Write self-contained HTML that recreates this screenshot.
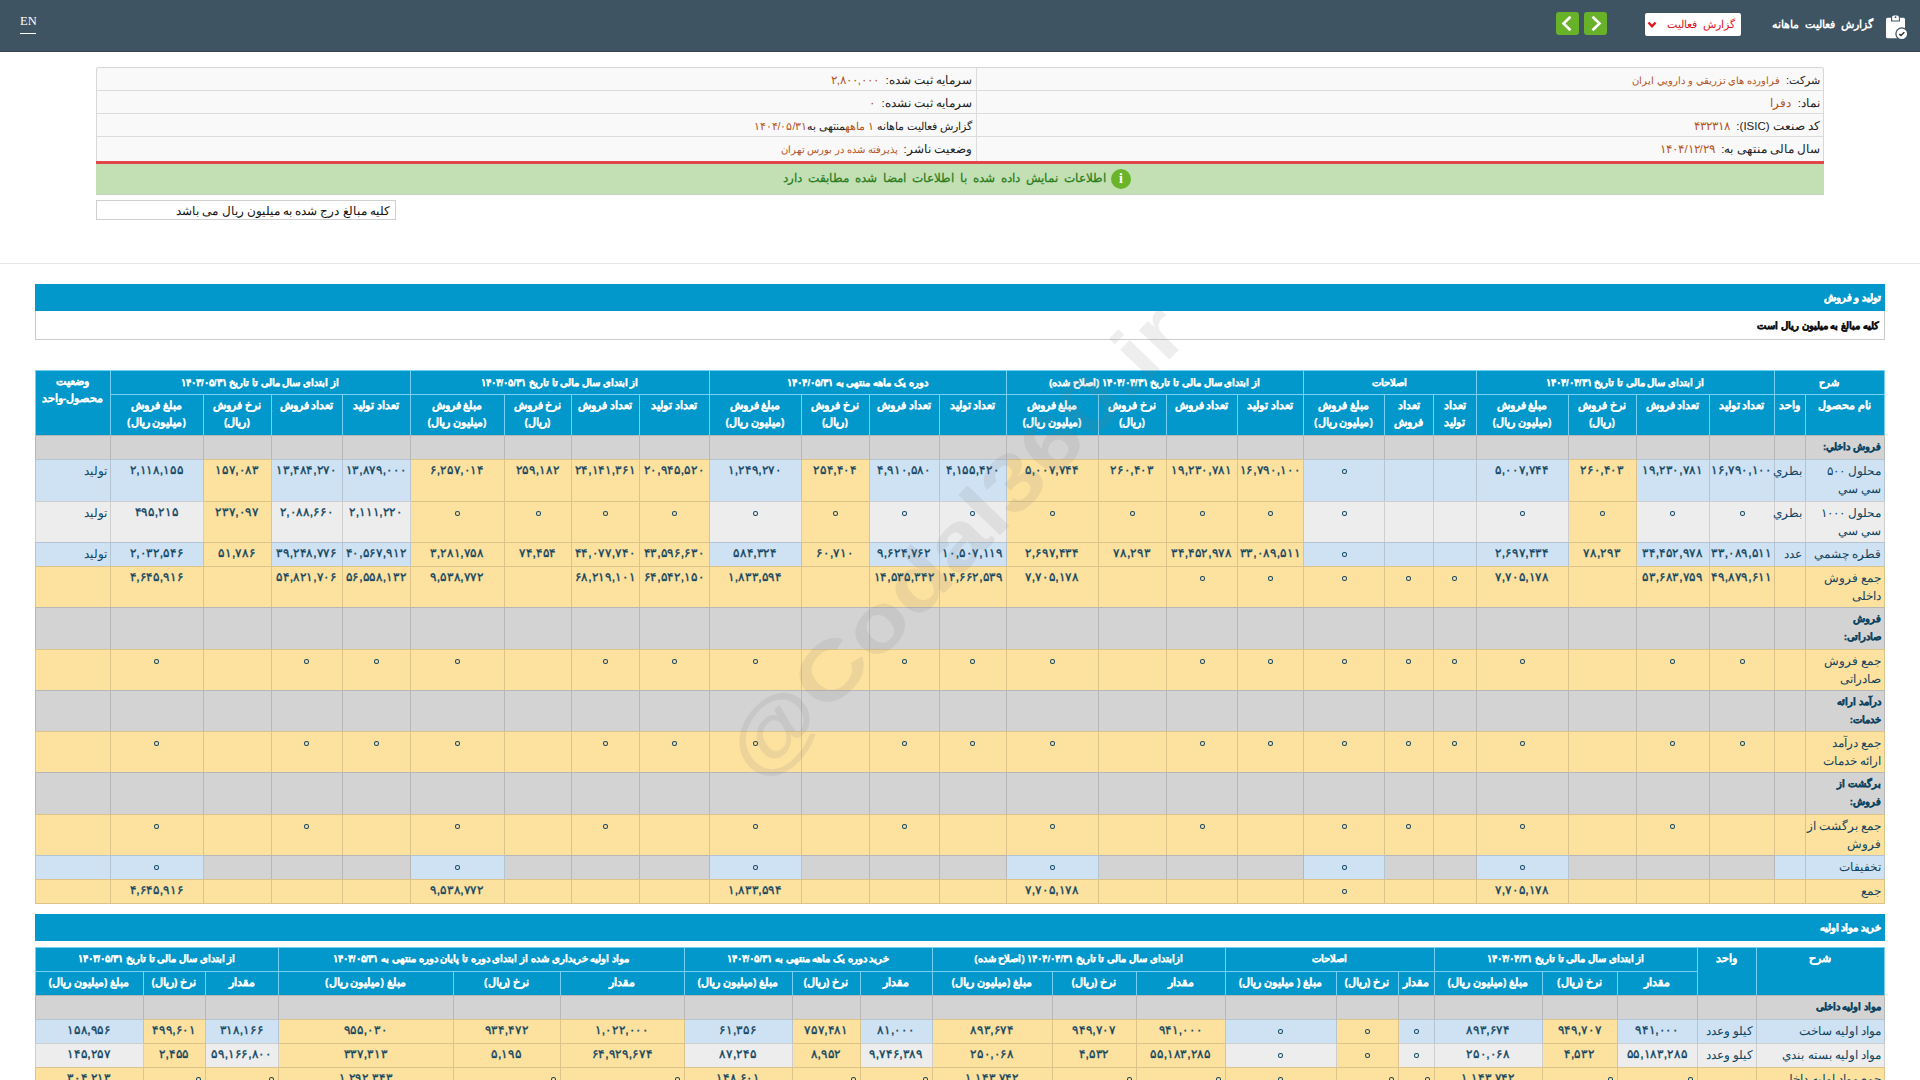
<!DOCTYPE html>
<html lang="fa"><head><meta charset="utf-8"><title>Codal</title>
<style>
html,body{margin:0;padding:0}
body{width:1920px;height:1080px;overflow:hidden;background:#fff;position:relative;font-family:"Liberation Sans",sans-serif;color:#0f4460}
.b{position:absolute;box-sizing:border-box;border:1px solid}
.t,.h,.hg,.n,.nb,.v,.a{position:absolute;box-sizing:border-box;direction:rtl;white-space:nowrap;overflow:visible}
.h{color:#fff;font-weight:bold;font-size:10.5px;line-height:17px;-webkit-text-stroke:0.2px #fff}
.hg{color:#fff;font-weight:bold;font-size:9.9px;line-height:17px;-webkit-text-stroke:0.25px #fff}
.n{font-size:11.5px;line-height:18px}
.nb{font-size:9.8px;line-height:18px;font-weight:bold;-webkit-text-stroke:0.35px #0f4460}
.v{font-size:11px;line-height:15px;font-weight:normal;-webkit-text-stroke:0.3px #0f4460;transform:scale(1.12);transform-origin:50% 7.5px}
.a{}
.z{position:absolute;width:5px;height:4.5px;box-sizing:border-box;border:1.4px solid #0f4460;border-radius:50%}
</style></head><body>
<!-- top bar -->
<div style="position:absolute;left:0;top:0;width:1920px;height:52px;background:#3e5462;box-sizing:border-box;border-bottom:1px solid #37464e"></div>
<div style="position:absolute;left:20px;top:14px;font-family:'Liberation Serif',serif;font-size:12.5px;color:#fff">EN</div>
<div style="position:absolute;left:20px;top:33px;width:16px;height:1px;background:#fff"></div>
<!-- green nav buttons -->
<div style="position:absolute;left:1556px;top:12px;width:23px;height:23px;background:#68b22a;border-radius:3px"></div>
<div style="position:absolute;left:1584px;top:12px;width:23px;height:23px;background:#68b22a;border-radius:3px"></div>
<svg style="position:absolute;left:1556px;top:12px" width="51" height="23"><path d="M14.5 4.8 L7.5 11.5 L14.5 18.2" stroke="#fff" stroke-width="2.6" fill="none"/><path d="M36.5 4.8 L43.5 11.5 L36.5 18.2" stroke="#fff" stroke-width="2.6" fill="none"/></svg>
<!-- select -->
<div style="position:absolute;left:1645px;top:13px;width:96px;height:23px;background:#fff;border-radius:2px"></div>
<div class="a" style="left:1660px;top:16px;width:75px;text-align:right;font-size:11.2px;word-spacing:3px;color:#e0141e;line-height:17px">گزارش فعالیت</div>
<svg style="position:absolute;left:1647px;top:21px" width="10" height="8"><path d="M1.5 1.5 L5 5.2 L8.5 1.5" stroke="#e0141e" stroke-width="2.4" fill="none"/></svg>
<div class="a" style="left:1740px;top:15px;width:133px;text-align:right;font-size:11.4px;word-spacing:3px;font-weight:bold;color:#fff;line-height:19px">گزارش فعالیت ماهانه</div>
<!-- clipboard icon -->
<svg style="position:absolute;left:1884px;top:14px" width="28" height="28" viewBox="0 0 28 28">
<rect x="2" y="3.7" width="19" height="20.6" rx="1.5" fill="#fff"/>
<path d="M7.6 7 L7.6 3.2 Q7.6 1 9.8 1 L13.2 1 Q15.4 1 15.4 3.2 L15.4 7 Z" fill="#fff" stroke="#3e5462" stroke-width="1.1"/>
<circle cx="11.5" cy="3.2" r="0.9" fill="#3e5462"/>
<circle cx="17.8" cy="19.8" r="5.9" fill="#fff" stroke="#3e5462" stroke-width="1.3"/>
<path d="M15.2 20 L17 21.5 L20.3 18.3" stroke="#333" stroke-width="1.6" fill="none"/>
</svg>

<!-- info box -->
<div style="position:absolute;left:96px;top:67px;width:1728px;height:96px;background:#f9f9f9;border:1px solid #d8d8d8;box-sizing:border-box;border-radius:2px"></div>
<div style="position:absolute;left:97px;top:90px;width:1726px;height:1px;background:#dcdcdc"></div>
<div style="position:absolute;left:97px;top:113px;width:1726px;height:1px;background:#dcdcdc"></div>
<div style="position:absolute;left:97px;top:136px;width:1726px;height:1px;background:#dcdcdc"></div>
<div style="position:absolute;left:976px;top:68px;width:1px;height:94px;background:#dcdcdc"></div>
<div style="position:absolute;left:96px;top:161px;width:1728px;height:3px;background:#e2464a"></div>
<div style="position:absolute;left:96px;top:164px;width:1728px;height:31px;background:#c3e0b5;border-bottom:1px solid #c7d3c0;box-sizing:border-box"></div>

<div class="a" style="left:1000px;top:72px;width:820px;text-align:right;font-size:11px;line-height:17px;color:#222">شرکت: <span style="color:#b5541c;font-size:10px">&nbsp;فراورده هاي تزريقي و دارويي ايران</span></div>
<div class="a" style="left:1000px;top:95px;width:820px;text-align:right;font-size:11.5px;line-height:17px;color:#222">نماد: <span style="color:#b5541c">&nbsp;دفرا</span></div>
<div class="a" style="left:1000px;top:118px;width:820px;text-align:right;font-size:11.5px;line-height:17px;color:#222">کد صنعت (ISIC): <span style="color:#b5541c">&nbsp;۴۳۲۳۱۸</span></div>
<div class="a" style="left:1000px;top:141px;width:820px;text-align:right;font-size:11.5px;line-height:17px;color:#222">سال مالی منتهی به: <span style="color:#b5541c">&nbsp;۱۴۰۴/۱۲/۲۹</span></div>
<div class="a" style="left:100px;top:72px;width:872px;text-align:right;font-size:11.5px;line-height:17px;color:#222">سرمایه ثبت شده: <span style="color:#b5541c">&nbsp;۲,۸۰۰,۰۰۰</span></div>
<div class="a" style="left:100px;top:95px;width:872px;text-align:right;font-size:11.5px;line-height:17px;color:#222">سرمایه ثبت نشده: <span style="color:#b5541c">&nbsp;۰</span></div>
<div class="a" style="left:100px;top:118px;width:872px;text-align:right;font-size:10.5px;line-height:17px;color:#222">گزارش فعالیت ماهانه <span style="color:#b5541c">۱ ماهه</span>منتهی به<span style="color:#b5541c">۱۴۰۴/۰۵/۳۱</span></div>
<div class="a" style="left:100px;top:141px;width:872px;text-align:right;font-size:11.5px;line-height:17px;color:#222">وضعیت ناشر: <span style="color:#b5541c;font-size:10px">&nbsp;پذیرفته شده در بورس تهران</span></div>
<div class="a" style="left:100px;top:170px;width:1006px;text-align:right;font-size:12.4px;word-spacing:2.6px;font-weight:normal;line-height:17px;color:#2a7d1c;-webkit-text-stroke:0.25px #2a7d1c">اطلاعات نمایش داده شده با اطلاعات امضا شده مطابقت دارد</div>
<div style="position:absolute;left:1111px;top:169px;width:20px;height:20px;border-radius:50%;background:#6ab42a"></div>
<div class="a" style="left:1111px;top:170px;width:20px;text-align:center;font-size:14px;font-weight:bold;color:#fff;line-height:18px;font-family:'Liberation Serif',serif;direction:ltr">i</div>

<div style="position:absolute;left:96px;top:200px;width:300px;height:20px;border:1px solid #cfcfcf;box-sizing:border-box;background:#fff"></div>
<div class="a" style="left:100px;top:202px;width:290px;text-align:right;font-size:11.7px;color:#111;line-height:17px">کلیه مبالغ درج شده به میلیون ریال می باشد</div>

<div style="position:absolute;left:0;top:263px;width:1920px;height:1px;background:#e6e6e6"></div>

<!-- section 1 -->
<div style="position:absolute;left:35px;top:284px;width:1850px;height:27px;background:#0298cb"></div>
<div class="a" style="left:1502px;top:288px;width:379px;text-align:right;font-size:9.8px;font-weight:bold;color:#fff;line-height:19px;-webkit-text-stroke:0.5px #fff">تولید و فروش</div>
<div style="position:absolute;left:35px;top:311px;width:1850px;height:29px;background:#fff;border:1px solid #cccccc;border-top:none;box-sizing:border-box"></div>
<div class="a" style="left:1500px;top:316px;width:379px;text-align:right;font-size:10px;font-weight:bold;color:#111;line-height:19px;-webkit-text-stroke:0.4px #111">کلیه مبالغ به میلیون ریال است</div>

<div class="b" style="left:1774px;top:370px;width:111px;height:25px;background:#0298cb;border-color:#74d1f2;"></div>
<div class="hg" style="left:1774px;top:374px;width:110px;height:20px;text-align:center;">شرح</div>
<div class="b" style="left:1476px;top:370px;width:299px;height:25px;background:#0298cb;border-color:#74d1f2;"></div>
<div class="hg" style="left:1476px;top:374px;width:298px;height:20px;text-align:center;">از ابتدای سال مالی تا تاریخ ۱۴۰۴/۰۴/۳۱</div>
<div class="b" style="left:1303px;top:370px;width:174px;height:25px;background:#0298cb;border-color:#74d1f2;"></div>
<div class="hg" style="left:1303px;top:374px;width:173px;height:20px;text-align:center;">اصلاحات</div>
<div class="b" style="left:1006px;top:370px;width:298px;height:25px;background:#0298cb;border-color:#74d1f2;"></div>
<div class="hg" style="left:1006px;top:374px;width:297px;height:20px;text-align:center;">از ابتدای سال مالی تا تاریخ ۱۴۰۴/۰۴/۳۱ (اصلاح شده)</div>
<div class="b" style="left:709px;top:370px;width:298px;height:25px;background:#0298cb;border-color:#74d1f2;"></div>
<div class="hg" style="left:709px;top:374px;width:297px;height:20px;text-align:center;">دوره یک ماهه منتهی به ۱۴۰۴/۰۵/۳۱</div>
<div class="b" style="left:410px;top:370px;width:300px;height:25px;background:#0298cb;border-color:#74d1f2;"></div>
<div class="hg" style="left:410px;top:374px;width:299px;height:20px;text-align:center;">از ابتدای سال مالی تا تاریخ ۱۴۰۴/۰۵/۳۱</div>
<div class="b" style="left:110px;top:370px;width:301px;height:25px;background:#0298cb;border-color:#74d1f2;"></div>
<div class="hg" style="left:110px;top:374px;width:300px;height:20px;text-align:center;">از ابتدای سال مالی تا تاریخ ۱۴۰۳/۰۵/۳۱</div>
<div class="b" style="left:35px;top:370px;width:76px;height:66px;background:#0298cb;border-color:#74d1f2;"></div>
<div class="h" style="left:35px;top:373px;width:75px;height:62px;text-align:center;">وضعیت<br>محصول-واحد</div>
<div class="b" style="left:1805px;top:394px;width:80px;height:42px;background:#0298cb;border-color:#74d1f2;"></div>
<div class="h" style="left:1805px;top:397px;width:79px;height:38px;text-align:center;">نام محصول</div>
<div class="b" style="left:1774px;top:394px;width:32px;height:42px;background:#0298cb;border-color:#74d1f2;"></div>
<div class="h" style="left:1774px;top:397px;width:31px;height:38px;text-align:center;">واحد</div>
<div class="b" style="left:1709px;top:394px;width:66px;height:42px;background:#0298cb;border-color:#74d1f2;"></div>
<div class="h" style="left:1709px;top:397px;width:65px;height:38px;text-align:center;">تعداد تولید</div>
<div class="b" style="left:1636px;top:394px;width:74px;height:42px;background:#0298cb;border-color:#74d1f2;"></div>
<div class="h" style="left:1636px;top:397px;width:73px;height:38px;text-align:center;">تعداد فروش</div>
<div class="b" style="left:1568px;top:394px;width:69px;height:42px;background:#0298cb;border-color:#74d1f2;"></div>
<div class="h" style="left:1568px;top:397px;width:68px;height:38px;text-align:center;">نرخ فروش<br>(ریال)</div>
<div class="b" style="left:1476px;top:394px;width:93px;height:42px;background:#0298cb;border-color:#74d1f2;"></div>
<div class="h" style="left:1476px;top:397px;width:92px;height:38px;text-align:center;">مبلغ فروش<br>(میلیون ریال)</div>
<div class="b" style="left:1433px;top:394px;width:44px;height:42px;background:#0298cb;border-color:#74d1f2;"></div>
<div class="h" style="left:1433px;top:397px;width:43px;height:38px;text-align:center;">تعداد<br>تولید</div>
<div class="b" style="left:1384px;top:394px;width:50px;height:42px;background:#0298cb;border-color:#74d1f2;"></div>
<div class="h" style="left:1384px;top:397px;width:49px;height:38px;text-align:center;">تعداد<br>فروش</div>
<div class="b" style="left:1303px;top:394px;width:82px;height:42px;background:#0298cb;border-color:#74d1f2;"></div>
<div class="h" style="left:1303px;top:397px;width:81px;height:38px;text-align:center;">مبلغ فروش<br>(میلیون ریال)</div>
<div class="b" style="left:1237px;top:394px;width:67px;height:42px;background:#0298cb;border-color:#74d1f2;"></div>
<div class="h" style="left:1237px;top:397px;width:66px;height:38px;text-align:center;">تعداد تولید</div>
<div class="b" style="left:1166px;top:394px;width:72px;height:42px;background:#0298cb;border-color:#74d1f2;"></div>
<div class="h" style="left:1166px;top:397px;width:71px;height:38px;text-align:center;">تعداد فروش</div>
<div class="b" style="left:1098px;top:394px;width:69px;height:42px;background:#0298cb;border-color:#74d1f2;"></div>
<div class="h" style="left:1098px;top:397px;width:68px;height:38px;text-align:center;">نرخ فروش<br>(ریال)</div>
<div class="b" style="left:1006px;top:394px;width:93px;height:42px;background:#0298cb;border-color:#74d1f2;"></div>
<div class="h" style="left:1006px;top:397px;width:92px;height:38px;text-align:center;">مبلغ فروش<br>(میلیون ریال)</div>
<div class="b" style="left:939px;top:394px;width:68px;height:42px;background:#0298cb;border-color:#74d1f2;"></div>
<div class="h" style="left:939px;top:397px;width:67px;height:38px;text-align:center;">تعداد تولید</div>
<div class="b" style="left:869px;top:394px;width:71px;height:42px;background:#0298cb;border-color:#74d1f2;"></div>
<div class="h" style="left:869px;top:397px;width:70px;height:38px;text-align:center;">تعداد فروش</div>
<div class="b" style="left:801px;top:394px;width:69px;height:42px;background:#0298cb;border-color:#74d1f2;"></div>
<div class="h" style="left:801px;top:397px;width:68px;height:38px;text-align:center;">نرخ فروش<br>(ریال)</div>
<div class="b" style="left:709px;top:394px;width:93px;height:42px;background:#0298cb;border-color:#74d1f2;"></div>
<div class="h" style="left:709px;top:397px;width:92px;height:38px;text-align:center;">مبلغ فروش<br>(میلیون ریال)</div>
<div class="b" style="left:639px;top:394px;width:71px;height:42px;background:#0298cb;border-color:#74d1f2;"></div>
<div class="h" style="left:639px;top:397px;width:70px;height:38px;text-align:center;">تعداد تولید</div>
<div class="b" style="left:571px;top:394px;width:69px;height:42px;background:#0298cb;border-color:#74d1f2;"></div>
<div class="h" style="left:571px;top:397px;width:68px;height:38px;text-align:center;">تعداد فروش</div>
<div class="b" style="left:504px;top:394px;width:68px;height:42px;background:#0298cb;border-color:#74d1f2;"></div>
<div class="h" style="left:504px;top:397px;width:67px;height:38px;text-align:center;">نرخ فروش<br>(ریال)</div>
<div class="b" style="left:410px;top:394px;width:95px;height:42px;background:#0298cb;border-color:#74d1f2;"></div>
<div class="h" style="left:410px;top:397px;width:94px;height:38px;text-align:center;">مبلغ فروش<br>(میلیون ریال)</div>
<div class="b" style="left:342px;top:394px;width:69px;height:42px;background:#0298cb;border-color:#74d1f2;"></div>
<div class="h" style="left:342px;top:397px;width:68px;height:38px;text-align:center;">تعداد تولید</div>
<div class="b" style="left:271px;top:394px;width:72px;height:42px;background:#0298cb;border-color:#74d1f2;"></div>
<div class="h" style="left:271px;top:397px;width:71px;height:38px;text-align:center;">تعداد فروش</div>
<div class="b" style="left:203px;top:394px;width:69px;height:42px;background:#0298cb;border-color:#74d1f2;"></div>
<div class="h" style="left:203px;top:397px;width:68px;height:38px;text-align:center;">نرخ فروش<br>(ریال)</div>
<div class="b" style="left:110px;top:394px;width:94px;height:42px;background:#0298cb;border-color:#74d1f2;"></div>
<div class="h" style="left:110px;top:397px;width:93px;height:38px;text-align:center;">مبلغ فروش<br>(میلیون ریال)</div>
<div class="b" style="left:1805px;top:435px;width:80px;height:25px;background:#d3d3d3;border-color:rgba(0,0,0,0.13);"></div>
<div class="b" style="left:1774px;top:435px;width:32px;height:25px;background:#d3d3d3;border-color:rgba(0,0,0,0.13);"></div>
<div class="b" style="left:1709px;top:435px;width:66px;height:25px;background:#d3d3d3;border-color:rgba(0,0,0,0.13);"></div>
<div class="b" style="left:1636px;top:435px;width:74px;height:25px;background:#d3d3d3;border-color:rgba(0,0,0,0.13);"></div>
<div class="b" style="left:1568px;top:435px;width:69px;height:25px;background:#d3d3d3;border-color:rgba(0,0,0,0.13);"></div>
<div class="b" style="left:1476px;top:435px;width:93px;height:25px;background:#d3d3d3;border-color:rgba(0,0,0,0.13);"></div>
<div class="b" style="left:1433px;top:435px;width:44px;height:25px;background:#d3d3d3;border-color:rgba(0,0,0,0.13);"></div>
<div class="b" style="left:1384px;top:435px;width:50px;height:25px;background:#d3d3d3;border-color:rgba(0,0,0,0.13);"></div>
<div class="b" style="left:1303px;top:435px;width:82px;height:25px;background:#d3d3d3;border-color:rgba(0,0,0,0.13);"></div>
<div class="b" style="left:1237px;top:435px;width:67px;height:25px;background:#d3d3d3;border-color:rgba(0,0,0,0.13);"></div>
<div class="b" style="left:1166px;top:435px;width:72px;height:25px;background:#d3d3d3;border-color:rgba(0,0,0,0.13);"></div>
<div class="b" style="left:1098px;top:435px;width:69px;height:25px;background:#d3d3d3;border-color:rgba(0,0,0,0.13);"></div>
<div class="b" style="left:1006px;top:435px;width:93px;height:25px;background:#d3d3d3;border-color:rgba(0,0,0,0.13);"></div>
<div class="b" style="left:939px;top:435px;width:68px;height:25px;background:#d3d3d3;border-color:rgba(0,0,0,0.13);"></div>
<div class="b" style="left:869px;top:435px;width:71px;height:25px;background:#d3d3d3;border-color:rgba(0,0,0,0.13);"></div>
<div class="b" style="left:801px;top:435px;width:69px;height:25px;background:#d3d3d3;border-color:rgba(0,0,0,0.13);"></div>
<div class="b" style="left:709px;top:435px;width:93px;height:25px;background:#d3d3d3;border-color:rgba(0,0,0,0.13);"></div>
<div class="b" style="left:639px;top:435px;width:71px;height:25px;background:#d3d3d3;border-color:rgba(0,0,0,0.13);"></div>
<div class="b" style="left:571px;top:435px;width:69px;height:25px;background:#d3d3d3;border-color:rgba(0,0,0,0.13);"></div>
<div class="b" style="left:504px;top:435px;width:68px;height:25px;background:#d3d3d3;border-color:rgba(0,0,0,0.13);"></div>
<div class="b" style="left:410px;top:435px;width:95px;height:25px;background:#d3d3d3;border-color:rgba(0,0,0,0.13);"></div>
<div class="b" style="left:342px;top:435px;width:69px;height:25px;background:#d3d3d3;border-color:rgba(0,0,0,0.13);"></div>
<div class="b" style="left:271px;top:435px;width:72px;height:25px;background:#d3d3d3;border-color:rgba(0,0,0,0.13);"></div>
<div class="b" style="left:203px;top:435px;width:69px;height:25px;background:#d3d3d3;border-color:rgba(0,0,0,0.13);"></div>
<div class="b" style="left:110px;top:435px;width:94px;height:25px;background:#d3d3d3;border-color:rgba(0,0,0,0.13);"></div>
<div class="b" style="left:35px;top:435px;width:76px;height:25px;background:#d3d3d3;border-color:rgba(0,0,0,0.13);"></div>
<div class="nb" style="left:1805px;top:438px;width:76px;height:21px;text-align:right;">فروش داخلي:</div>
<div class="b" style="left:1805px;top:459px;width:80px;height:43px;background:#cfe2f3;border-color:rgba(0,0,0,0.13);"></div>
<div class="b" style="left:1774px;top:459px;width:32px;height:43px;background:#cfe2f3;border-color:rgba(0,0,0,0.13);"></div>
<div class="b" style="left:1709px;top:459px;width:66px;height:43px;background:#cfe2f3;border-color:rgba(0,0,0,0.13);"></div>
<div class="b" style="left:1636px;top:459px;width:74px;height:43px;background:#cfe2f3;border-color:rgba(0,0,0,0.13);"></div>
<div class="b" style="left:1568px;top:459px;width:69px;height:43px;background:#fde19f;border-color:rgba(0,0,0,0.13);"></div>
<div class="b" style="left:1476px;top:459px;width:93px;height:43px;background:#cfe2f3;border-color:rgba(0,0,0,0.13);"></div>
<div class="b" style="left:1433px;top:459px;width:44px;height:43px;background:#cfe2f3;border-color:rgba(0,0,0,0.13);"></div>
<div class="b" style="left:1384px;top:459px;width:50px;height:43px;background:#cfe2f3;border-color:rgba(0,0,0,0.13);"></div>
<div class="b" style="left:1303px;top:459px;width:82px;height:43px;background:#cfe2f3;border-color:rgba(0,0,0,0.13);"></div>
<div class="b" style="left:1237px;top:459px;width:67px;height:43px;background:#fde19f;border-color:rgba(0,0,0,0.13);"></div>
<div class="b" style="left:1166px;top:459px;width:72px;height:43px;background:#fde19f;border-color:rgba(0,0,0,0.13);"></div>
<div class="b" style="left:1098px;top:459px;width:69px;height:43px;background:#fde19f;border-color:rgba(0,0,0,0.13);"></div>
<div class="b" style="left:1006px;top:459px;width:93px;height:43px;background:#fde19f;border-color:rgba(0,0,0,0.13);"></div>
<div class="b" style="left:939px;top:459px;width:68px;height:43px;background:#cfe2f3;border-color:rgba(0,0,0,0.13);"></div>
<div class="b" style="left:869px;top:459px;width:71px;height:43px;background:#cfe2f3;border-color:rgba(0,0,0,0.13);"></div>
<div class="b" style="left:801px;top:459px;width:69px;height:43px;background:#fde19f;border-color:rgba(0,0,0,0.13);"></div>
<div class="b" style="left:709px;top:459px;width:93px;height:43px;background:#cfe2f3;border-color:rgba(0,0,0,0.13);"></div>
<div class="b" style="left:639px;top:459px;width:71px;height:43px;background:#fde19f;border-color:rgba(0,0,0,0.13);"></div>
<div class="b" style="left:571px;top:459px;width:69px;height:43px;background:#fde19f;border-color:rgba(0,0,0,0.13);"></div>
<div class="b" style="left:504px;top:459px;width:68px;height:43px;background:#fde19f;border-color:rgba(0,0,0,0.13);"></div>
<div class="b" style="left:410px;top:459px;width:95px;height:43px;background:#fde19f;border-color:rgba(0,0,0,0.13);"></div>
<div class="b" style="left:342px;top:459px;width:69px;height:43px;background:#cfe2f3;border-color:rgba(0,0,0,0.13);"></div>
<div class="b" style="left:271px;top:459px;width:72px;height:43px;background:#cfe2f3;border-color:rgba(0,0,0,0.13);"></div>
<div class="b" style="left:203px;top:459px;width:69px;height:43px;background:#fde19f;border-color:rgba(0,0,0,0.13);"></div>
<div class="b" style="left:110px;top:459px;width:94px;height:43px;background:#cfe2f3;border-color:rgba(0,0,0,0.13);"></div>
<div class="b" style="left:35px;top:459px;width:76px;height:43px;background:#cfe2f3;border-color:rgba(0,0,0,0.13);"></div>
<div class="n" style="left:1805px;top:462px;width:76px;height:39px;text-align:right;">محلول ۵۰۰<br>سي سي</div>
<div class="n" style="left:1774px;top:462px;width:28px;height:39px;text-align:right;">بطري</div>
<div class="v" style="left:1709px;top:463px;width:65px;height:38px;text-align:center;">۱۶,۷۹۰,۱۰۰</div>
<div class="v" style="left:1636px;top:463px;width:73px;height:38px;text-align:center;">۱۹,۲۳۰,۷۸۱</div>
<div class="v" style="left:1568px;top:463px;width:68px;height:38px;text-align:center;">۲۶۰,۴۰۳</div>
<div class="v" style="left:1476px;top:463px;width:92px;height:38px;text-align:center;">۵,۰۰۷,۷۴۴</div>
<div class="z" style="left:1342px;top:469px"></div>
<div class="v" style="left:1237px;top:463px;width:66px;height:38px;text-align:center;">۱۶,۷۹۰,۱۰۰</div>
<div class="v" style="left:1166px;top:463px;width:71px;height:38px;text-align:center;">۱۹,۲۳۰,۷۸۱</div>
<div class="v" style="left:1098px;top:463px;width:68px;height:38px;text-align:center;">۲۶۰,۴۰۳</div>
<div class="v" style="left:1006px;top:463px;width:92px;height:38px;text-align:center;">۵,۰۰۷,۷۴۴</div>
<div class="v" style="left:939px;top:463px;width:67px;height:38px;text-align:center;">۴,۱۵۵,۴۲۰</div>
<div class="v" style="left:869px;top:463px;width:70px;height:38px;text-align:center;">۴,۹۱۰,۵۸۰</div>
<div class="v" style="left:801px;top:463px;width:68px;height:38px;text-align:center;">۲۵۴,۴۰۴</div>
<div class="v" style="left:709px;top:463px;width:92px;height:38px;text-align:center;">۱,۲۴۹,۲۷۰</div>
<div class="v" style="left:639px;top:463px;width:70px;height:38px;text-align:center;">۲۰,۹۴۵,۵۲۰</div>
<div class="v" style="left:571px;top:463px;width:68px;height:38px;text-align:center;">۲۴,۱۴۱,۳۶۱</div>
<div class="v" style="left:504px;top:463px;width:67px;height:38px;text-align:center;">۲۵۹,۱۸۲</div>
<div class="v" style="left:410px;top:463px;width:94px;height:38px;text-align:center;">۶,۲۵۷,۰۱۴</div>
<div class="v" style="left:342px;top:463px;width:68px;height:38px;text-align:center;">۱۳,۸۷۹,۰۰۰</div>
<div class="v" style="left:271px;top:463px;width:71px;height:38px;text-align:center;">۱۳,۴۸۴,۲۷۰</div>
<div class="v" style="left:203px;top:463px;width:68px;height:38px;text-align:center;">۱۵۷,۰۸۳</div>
<div class="v" style="left:110px;top:463px;width:93px;height:38px;text-align:center;">۲,۱۱۸,۱۵۵</div>
<div class="n" style="left:35px;top:462px;width:72px;height:39px;text-align:right;">تولید</div>
<div class="b" style="left:1805px;top:501px;width:80px;height:42px;background:#ededed;border-color:rgba(0,0,0,0.13);"></div>
<div class="b" style="left:1774px;top:501px;width:32px;height:42px;background:#ededed;border-color:rgba(0,0,0,0.13);"></div>
<div class="b" style="left:1709px;top:501px;width:66px;height:42px;background:#ededed;border-color:rgba(0,0,0,0.13);"></div>
<div class="b" style="left:1636px;top:501px;width:74px;height:42px;background:#ededed;border-color:rgba(0,0,0,0.13);"></div>
<div class="b" style="left:1568px;top:501px;width:69px;height:42px;background:#fde19f;border-color:rgba(0,0,0,0.13);"></div>
<div class="b" style="left:1476px;top:501px;width:93px;height:42px;background:#ededed;border-color:rgba(0,0,0,0.13);"></div>
<div class="b" style="left:1433px;top:501px;width:44px;height:42px;background:#ededed;border-color:rgba(0,0,0,0.13);"></div>
<div class="b" style="left:1384px;top:501px;width:50px;height:42px;background:#ededed;border-color:rgba(0,0,0,0.13);"></div>
<div class="b" style="left:1303px;top:501px;width:82px;height:42px;background:#ededed;border-color:rgba(0,0,0,0.13);"></div>
<div class="b" style="left:1237px;top:501px;width:67px;height:42px;background:#fde19f;border-color:rgba(0,0,0,0.13);"></div>
<div class="b" style="left:1166px;top:501px;width:72px;height:42px;background:#fde19f;border-color:rgba(0,0,0,0.13);"></div>
<div class="b" style="left:1098px;top:501px;width:69px;height:42px;background:#fde19f;border-color:rgba(0,0,0,0.13);"></div>
<div class="b" style="left:1006px;top:501px;width:93px;height:42px;background:#fde19f;border-color:rgba(0,0,0,0.13);"></div>
<div class="b" style="left:939px;top:501px;width:68px;height:42px;background:#ededed;border-color:rgba(0,0,0,0.13);"></div>
<div class="b" style="left:869px;top:501px;width:71px;height:42px;background:#ededed;border-color:rgba(0,0,0,0.13);"></div>
<div class="b" style="left:801px;top:501px;width:69px;height:42px;background:#fde19f;border-color:rgba(0,0,0,0.13);"></div>
<div class="b" style="left:709px;top:501px;width:93px;height:42px;background:#ededed;border-color:rgba(0,0,0,0.13);"></div>
<div class="b" style="left:639px;top:501px;width:71px;height:42px;background:#fde19f;border-color:rgba(0,0,0,0.13);"></div>
<div class="b" style="left:571px;top:501px;width:69px;height:42px;background:#fde19f;border-color:rgba(0,0,0,0.13);"></div>
<div class="b" style="left:504px;top:501px;width:68px;height:42px;background:#fde19f;border-color:rgba(0,0,0,0.13);"></div>
<div class="b" style="left:410px;top:501px;width:95px;height:42px;background:#fde19f;border-color:rgba(0,0,0,0.13);"></div>
<div class="b" style="left:342px;top:501px;width:69px;height:42px;background:#ededed;border-color:rgba(0,0,0,0.13);"></div>
<div class="b" style="left:271px;top:501px;width:72px;height:42px;background:#ededed;border-color:rgba(0,0,0,0.13);"></div>
<div class="b" style="left:203px;top:501px;width:69px;height:42px;background:#fde19f;border-color:rgba(0,0,0,0.13);"></div>
<div class="b" style="left:110px;top:501px;width:94px;height:42px;background:#ededed;border-color:rgba(0,0,0,0.13);"></div>
<div class="b" style="left:35px;top:501px;width:76px;height:42px;background:#ededed;border-color:rgba(0,0,0,0.13);"></div>
<div class="n" style="left:1805px;top:504px;width:76px;height:38px;text-align:right;">محلول ۱۰۰۰<br>سي سي</div>
<div class="n" style="left:1774px;top:504px;width:28px;height:38px;text-align:right;">بطري</div>
<div class="z" style="left:1740px;top:511px"></div>
<div class="z" style="left:1670px;top:511px"></div>
<div class="z" style="left:1600px;top:511px"></div>
<div class="z" style="left:1520px;top:511px"></div>
<div class="z" style="left:1342px;top:511px"></div>
<div class="z" style="left:1268px;top:511px"></div>
<div class="z" style="left:1200px;top:511px"></div>
<div class="z" style="left:1130px;top:511px"></div>
<div class="z" style="left:1050px;top:511px"></div>
<div class="z" style="left:970px;top:511px"></div>
<div class="z" style="left:902px;top:511px"></div>
<div class="z" style="left:833px;top:511px"></div>
<div class="z" style="left:753px;top:511px"></div>
<div class="z" style="left:672px;top:511px"></div>
<div class="z" style="left:603px;top:511px"></div>
<div class="z" style="left:536px;top:511px"></div>
<div class="z" style="left:455px;top:511px"></div>
<div class="v" style="left:342px;top:505px;width:68px;height:37px;text-align:center;">۲,۱۱۱,۲۲۰</div>
<div class="v" style="left:271px;top:505px;width:71px;height:37px;text-align:center;">۲,۰۸۸,۶۶۰</div>
<div class="v" style="left:203px;top:505px;width:68px;height:37px;text-align:center;">۲۳۷,۰۹۷</div>
<div class="v" style="left:110px;top:505px;width:93px;height:37px;text-align:center;">۴۹۵,۲۱۵</div>
<div class="n" style="left:35px;top:504px;width:72px;height:38px;text-align:right;">تولید</div>
<div class="b" style="left:1805px;top:542px;width:80px;height:25px;background:#cfe2f3;border-color:rgba(0,0,0,0.13);"></div>
<div class="b" style="left:1774px;top:542px;width:32px;height:25px;background:#cfe2f3;border-color:rgba(0,0,0,0.13);"></div>
<div class="b" style="left:1709px;top:542px;width:66px;height:25px;background:#cfe2f3;border-color:rgba(0,0,0,0.13);"></div>
<div class="b" style="left:1636px;top:542px;width:74px;height:25px;background:#cfe2f3;border-color:rgba(0,0,0,0.13);"></div>
<div class="b" style="left:1568px;top:542px;width:69px;height:25px;background:#fde19f;border-color:rgba(0,0,0,0.13);"></div>
<div class="b" style="left:1476px;top:542px;width:93px;height:25px;background:#cfe2f3;border-color:rgba(0,0,0,0.13);"></div>
<div class="b" style="left:1433px;top:542px;width:44px;height:25px;background:#cfe2f3;border-color:rgba(0,0,0,0.13);"></div>
<div class="b" style="left:1384px;top:542px;width:50px;height:25px;background:#cfe2f3;border-color:rgba(0,0,0,0.13);"></div>
<div class="b" style="left:1303px;top:542px;width:82px;height:25px;background:#cfe2f3;border-color:rgba(0,0,0,0.13);"></div>
<div class="b" style="left:1237px;top:542px;width:67px;height:25px;background:#fde19f;border-color:rgba(0,0,0,0.13);"></div>
<div class="b" style="left:1166px;top:542px;width:72px;height:25px;background:#fde19f;border-color:rgba(0,0,0,0.13);"></div>
<div class="b" style="left:1098px;top:542px;width:69px;height:25px;background:#fde19f;border-color:rgba(0,0,0,0.13);"></div>
<div class="b" style="left:1006px;top:542px;width:93px;height:25px;background:#fde19f;border-color:rgba(0,0,0,0.13);"></div>
<div class="b" style="left:939px;top:542px;width:68px;height:25px;background:#cfe2f3;border-color:rgba(0,0,0,0.13);"></div>
<div class="b" style="left:869px;top:542px;width:71px;height:25px;background:#cfe2f3;border-color:rgba(0,0,0,0.13);"></div>
<div class="b" style="left:801px;top:542px;width:69px;height:25px;background:#fde19f;border-color:rgba(0,0,0,0.13);"></div>
<div class="b" style="left:709px;top:542px;width:93px;height:25px;background:#cfe2f3;border-color:rgba(0,0,0,0.13);"></div>
<div class="b" style="left:639px;top:542px;width:71px;height:25px;background:#fde19f;border-color:rgba(0,0,0,0.13);"></div>
<div class="b" style="left:571px;top:542px;width:69px;height:25px;background:#fde19f;border-color:rgba(0,0,0,0.13);"></div>
<div class="b" style="left:504px;top:542px;width:68px;height:25px;background:#fde19f;border-color:rgba(0,0,0,0.13);"></div>
<div class="b" style="left:410px;top:542px;width:95px;height:25px;background:#fde19f;border-color:rgba(0,0,0,0.13);"></div>
<div class="b" style="left:342px;top:542px;width:69px;height:25px;background:#cfe2f3;border-color:rgba(0,0,0,0.13);"></div>
<div class="b" style="left:271px;top:542px;width:72px;height:25px;background:#cfe2f3;border-color:rgba(0,0,0,0.13);"></div>
<div class="b" style="left:203px;top:542px;width:69px;height:25px;background:#fde19f;border-color:rgba(0,0,0,0.13);"></div>
<div class="b" style="left:110px;top:542px;width:94px;height:25px;background:#cfe2f3;border-color:rgba(0,0,0,0.13);"></div>
<div class="b" style="left:35px;top:542px;width:76px;height:25px;background:#cfe2f3;border-color:rgba(0,0,0,0.13);"></div>
<div class="n" style="left:1805px;top:545px;width:76px;height:21px;text-align:right;">قطره چشمي</div>
<div class="n" style="left:1774px;top:545px;width:28px;height:21px;text-align:right;">عدد</div>
<div class="v" style="left:1709px;top:546px;width:65px;height:20px;text-align:center;">۳۳,۰۸۹,۵۱۱</div>
<div class="v" style="left:1636px;top:546px;width:73px;height:20px;text-align:center;">۳۴,۴۵۲,۹۷۸</div>
<div class="v" style="left:1568px;top:546px;width:68px;height:20px;text-align:center;">۷۸,۲۹۳</div>
<div class="v" style="left:1476px;top:546px;width:92px;height:20px;text-align:center;">۲,۶۹۷,۴۳۴</div>
<div class="z" style="left:1342px;top:552px"></div>
<div class="v" style="left:1237px;top:546px;width:66px;height:20px;text-align:center;">۳۳,۰۸۹,۵۱۱</div>
<div class="v" style="left:1166px;top:546px;width:71px;height:20px;text-align:center;">۳۴,۴۵۲,۹۷۸</div>
<div class="v" style="left:1098px;top:546px;width:68px;height:20px;text-align:center;">۷۸,۲۹۳</div>
<div class="v" style="left:1006px;top:546px;width:92px;height:20px;text-align:center;">۲,۶۹۷,۴۳۴</div>
<div class="v" style="left:939px;top:546px;width:67px;height:20px;text-align:center;">۱۰,۵۰۷,۱۱۹</div>
<div class="v" style="left:869px;top:546px;width:70px;height:20px;text-align:center;">۹,۶۲۴,۷۶۲</div>
<div class="v" style="left:801px;top:546px;width:68px;height:20px;text-align:center;">۶۰,۷۱۰</div>
<div class="v" style="left:709px;top:546px;width:92px;height:20px;text-align:center;">۵۸۴,۳۲۴</div>
<div class="v" style="left:639px;top:546px;width:70px;height:20px;text-align:center;">۴۳,۵۹۶,۶۳۰</div>
<div class="v" style="left:571px;top:546px;width:68px;height:20px;text-align:center;">۴۴,۰۷۷,۷۴۰</div>
<div class="v" style="left:504px;top:546px;width:67px;height:20px;text-align:center;">۷۴,۴۵۴</div>
<div class="v" style="left:410px;top:546px;width:94px;height:20px;text-align:center;">۳,۲۸۱,۷۵۸</div>
<div class="v" style="left:342px;top:546px;width:68px;height:20px;text-align:center;">۴۰,۵۶۷,۹۱۲</div>
<div class="v" style="left:271px;top:546px;width:71px;height:20px;text-align:center;">۳۹,۲۴۸,۷۷۶</div>
<div class="v" style="left:203px;top:546px;width:68px;height:20px;text-align:center;">۵۱,۷۸۶</div>
<div class="v" style="left:110px;top:546px;width:93px;height:20px;text-align:center;">۲,۰۳۲,۵۴۶</div>
<div class="n" style="left:35px;top:545px;width:72px;height:21px;text-align:right;">تولید</div>
<div class="b" style="left:1805px;top:566px;width:80px;height:42px;background:#fde19f;border-color:rgba(0,0,0,0.13);"></div>
<div class="b" style="left:1774px;top:566px;width:32px;height:42px;background:#fde19f;border-color:rgba(0,0,0,0.13);"></div>
<div class="b" style="left:1709px;top:566px;width:66px;height:42px;background:#fde19f;border-color:rgba(0,0,0,0.13);"></div>
<div class="b" style="left:1636px;top:566px;width:74px;height:42px;background:#fde19f;border-color:rgba(0,0,0,0.13);"></div>
<div class="b" style="left:1568px;top:566px;width:69px;height:42px;background:#fde19f;border-color:rgba(0,0,0,0.13);"></div>
<div class="b" style="left:1476px;top:566px;width:93px;height:42px;background:#fde19f;border-color:rgba(0,0,0,0.13);"></div>
<div class="b" style="left:1433px;top:566px;width:44px;height:42px;background:#fde19f;border-color:rgba(0,0,0,0.13);"></div>
<div class="b" style="left:1384px;top:566px;width:50px;height:42px;background:#fde19f;border-color:rgba(0,0,0,0.13);"></div>
<div class="b" style="left:1303px;top:566px;width:82px;height:42px;background:#fde19f;border-color:rgba(0,0,0,0.13);"></div>
<div class="b" style="left:1237px;top:566px;width:67px;height:42px;background:#fde19f;border-color:rgba(0,0,0,0.13);"></div>
<div class="b" style="left:1166px;top:566px;width:72px;height:42px;background:#fde19f;border-color:rgba(0,0,0,0.13);"></div>
<div class="b" style="left:1098px;top:566px;width:69px;height:42px;background:#fde19f;border-color:rgba(0,0,0,0.13);"></div>
<div class="b" style="left:1006px;top:566px;width:93px;height:42px;background:#fde19f;border-color:rgba(0,0,0,0.13);"></div>
<div class="b" style="left:939px;top:566px;width:68px;height:42px;background:#fde19f;border-color:rgba(0,0,0,0.13);"></div>
<div class="b" style="left:869px;top:566px;width:71px;height:42px;background:#fde19f;border-color:rgba(0,0,0,0.13);"></div>
<div class="b" style="left:801px;top:566px;width:69px;height:42px;background:#fde19f;border-color:rgba(0,0,0,0.13);"></div>
<div class="b" style="left:709px;top:566px;width:93px;height:42px;background:#fde19f;border-color:rgba(0,0,0,0.13);"></div>
<div class="b" style="left:639px;top:566px;width:71px;height:42px;background:#fde19f;border-color:rgba(0,0,0,0.13);"></div>
<div class="b" style="left:571px;top:566px;width:69px;height:42px;background:#fde19f;border-color:rgba(0,0,0,0.13);"></div>
<div class="b" style="left:504px;top:566px;width:68px;height:42px;background:#fde19f;border-color:rgba(0,0,0,0.13);"></div>
<div class="b" style="left:410px;top:566px;width:95px;height:42px;background:#fde19f;border-color:rgba(0,0,0,0.13);"></div>
<div class="b" style="left:342px;top:566px;width:69px;height:42px;background:#fde19f;border-color:rgba(0,0,0,0.13);"></div>
<div class="b" style="left:271px;top:566px;width:72px;height:42px;background:#fde19f;border-color:rgba(0,0,0,0.13);"></div>
<div class="b" style="left:203px;top:566px;width:69px;height:42px;background:#fde19f;border-color:rgba(0,0,0,0.13);"></div>
<div class="b" style="left:110px;top:566px;width:94px;height:42px;background:#fde19f;border-color:rgba(0,0,0,0.13);"></div>
<div class="b" style="left:35px;top:566px;width:76px;height:42px;background:#fde19f;border-color:rgba(0,0,0,0.13);"></div>
<div class="n" style="left:1805px;top:569px;width:76px;height:38px;text-align:right;">جمع فروش<br>داخلی</div>
<div class="v" style="left:1709px;top:570px;width:65px;height:37px;text-align:center;">۴۹,۸۷۹,۶۱۱</div>
<div class="v" style="left:1636px;top:570px;width:73px;height:37px;text-align:center;">۵۳,۶۸۳,۷۵۹</div>
<div class="v" style="left:1476px;top:570px;width:92px;height:37px;text-align:center;">۷,۷۰۵,۱۷۸</div>
<div class="z" style="left:1452px;top:576px"></div>
<div class="z" style="left:1406px;top:576px"></div>
<div class="z" style="left:1342px;top:576px"></div>
<div class="z" style="left:1268px;top:576px"></div>
<div class="z" style="left:1200px;top:576px"></div>
<div class="v" style="left:1006px;top:570px;width:92px;height:37px;text-align:center;">۷,۷۰۵,۱۷۸</div>
<div class="v" style="left:939px;top:570px;width:67px;height:37px;text-align:center;">۱۴,۶۶۲,۵۳۹</div>
<div class="v" style="left:869px;top:570px;width:70px;height:37px;text-align:center;">۱۴,۵۳۵,۳۴۲</div>
<div class="v" style="left:709px;top:570px;width:92px;height:37px;text-align:center;">۱,۸۳۳,۵۹۴</div>
<div class="v" style="left:639px;top:570px;width:70px;height:37px;text-align:center;">۶۴,۵۴۲,۱۵۰</div>
<div class="v" style="left:571px;top:570px;width:68px;height:37px;text-align:center;">۶۸,۲۱۹,۱۰۱</div>
<div class="v" style="left:410px;top:570px;width:94px;height:37px;text-align:center;">۹,۵۳۸,۷۷۲</div>
<div class="v" style="left:342px;top:570px;width:68px;height:37px;text-align:center;">۵۶,۵۵۸,۱۳۲</div>
<div class="v" style="left:271px;top:570px;width:71px;height:37px;text-align:center;">۵۴,۸۲۱,۷۰۶</div>
<div class="v" style="left:110px;top:570px;width:93px;height:37px;text-align:center;">۴,۶۴۵,۹۱۶</div>
<div class="b" style="left:1805px;top:607px;width:80px;height:43px;background:#d3d3d3;border-color:rgba(0,0,0,0.13);"></div>
<div class="b" style="left:1774px;top:607px;width:32px;height:43px;background:#d3d3d3;border-color:rgba(0,0,0,0.13);"></div>
<div class="b" style="left:1709px;top:607px;width:66px;height:43px;background:#d3d3d3;border-color:rgba(0,0,0,0.13);"></div>
<div class="b" style="left:1636px;top:607px;width:74px;height:43px;background:#d3d3d3;border-color:rgba(0,0,0,0.13);"></div>
<div class="b" style="left:1568px;top:607px;width:69px;height:43px;background:#d3d3d3;border-color:rgba(0,0,0,0.13);"></div>
<div class="b" style="left:1476px;top:607px;width:93px;height:43px;background:#d3d3d3;border-color:rgba(0,0,0,0.13);"></div>
<div class="b" style="left:1433px;top:607px;width:44px;height:43px;background:#d3d3d3;border-color:rgba(0,0,0,0.13);"></div>
<div class="b" style="left:1384px;top:607px;width:50px;height:43px;background:#d3d3d3;border-color:rgba(0,0,0,0.13);"></div>
<div class="b" style="left:1303px;top:607px;width:82px;height:43px;background:#d3d3d3;border-color:rgba(0,0,0,0.13);"></div>
<div class="b" style="left:1237px;top:607px;width:67px;height:43px;background:#d3d3d3;border-color:rgba(0,0,0,0.13);"></div>
<div class="b" style="left:1166px;top:607px;width:72px;height:43px;background:#d3d3d3;border-color:rgba(0,0,0,0.13);"></div>
<div class="b" style="left:1098px;top:607px;width:69px;height:43px;background:#d3d3d3;border-color:rgba(0,0,0,0.13);"></div>
<div class="b" style="left:1006px;top:607px;width:93px;height:43px;background:#d3d3d3;border-color:rgba(0,0,0,0.13);"></div>
<div class="b" style="left:939px;top:607px;width:68px;height:43px;background:#d3d3d3;border-color:rgba(0,0,0,0.13);"></div>
<div class="b" style="left:869px;top:607px;width:71px;height:43px;background:#d3d3d3;border-color:rgba(0,0,0,0.13);"></div>
<div class="b" style="left:801px;top:607px;width:69px;height:43px;background:#d3d3d3;border-color:rgba(0,0,0,0.13);"></div>
<div class="b" style="left:709px;top:607px;width:93px;height:43px;background:#d3d3d3;border-color:rgba(0,0,0,0.13);"></div>
<div class="b" style="left:639px;top:607px;width:71px;height:43px;background:#d3d3d3;border-color:rgba(0,0,0,0.13);"></div>
<div class="b" style="left:571px;top:607px;width:69px;height:43px;background:#d3d3d3;border-color:rgba(0,0,0,0.13);"></div>
<div class="b" style="left:504px;top:607px;width:68px;height:43px;background:#d3d3d3;border-color:rgba(0,0,0,0.13);"></div>
<div class="b" style="left:410px;top:607px;width:95px;height:43px;background:#d3d3d3;border-color:rgba(0,0,0,0.13);"></div>
<div class="b" style="left:342px;top:607px;width:69px;height:43px;background:#d3d3d3;border-color:rgba(0,0,0,0.13);"></div>
<div class="b" style="left:271px;top:607px;width:72px;height:43px;background:#d3d3d3;border-color:rgba(0,0,0,0.13);"></div>
<div class="b" style="left:203px;top:607px;width:69px;height:43px;background:#d3d3d3;border-color:rgba(0,0,0,0.13);"></div>
<div class="b" style="left:110px;top:607px;width:94px;height:43px;background:#d3d3d3;border-color:rgba(0,0,0,0.13);"></div>
<div class="b" style="left:35px;top:607px;width:76px;height:43px;background:#d3d3d3;border-color:rgba(0,0,0,0.13);"></div>
<div class="nb" style="left:1805px;top:610px;width:76px;height:39px;text-align:right;">فروش<br>صادراتی:</div>
<div class="b" style="left:1805px;top:649px;width:80px;height:42px;background:#fde19f;border-color:rgba(0,0,0,0.13);"></div>
<div class="b" style="left:1774px;top:649px;width:32px;height:42px;background:#fde19f;border-color:rgba(0,0,0,0.13);"></div>
<div class="b" style="left:1709px;top:649px;width:66px;height:42px;background:#fde19f;border-color:rgba(0,0,0,0.13);"></div>
<div class="b" style="left:1636px;top:649px;width:74px;height:42px;background:#fde19f;border-color:rgba(0,0,0,0.13);"></div>
<div class="b" style="left:1568px;top:649px;width:69px;height:42px;background:#fde19f;border-color:rgba(0,0,0,0.13);"></div>
<div class="b" style="left:1476px;top:649px;width:93px;height:42px;background:#fde19f;border-color:rgba(0,0,0,0.13);"></div>
<div class="b" style="left:1433px;top:649px;width:44px;height:42px;background:#fde19f;border-color:rgba(0,0,0,0.13);"></div>
<div class="b" style="left:1384px;top:649px;width:50px;height:42px;background:#fde19f;border-color:rgba(0,0,0,0.13);"></div>
<div class="b" style="left:1303px;top:649px;width:82px;height:42px;background:#fde19f;border-color:rgba(0,0,0,0.13);"></div>
<div class="b" style="left:1237px;top:649px;width:67px;height:42px;background:#fde19f;border-color:rgba(0,0,0,0.13);"></div>
<div class="b" style="left:1166px;top:649px;width:72px;height:42px;background:#fde19f;border-color:rgba(0,0,0,0.13);"></div>
<div class="b" style="left:1098px;top:649px;width:69px;height:42px;background:#fde19f;border-color:rgba(0,0,0,0.13);"></div>
<div class="b" style="left:1006px;top:649px;width:93px;height:42px;background:#fde19f;border-color:rgba(0,0,0,0.13);"></div>
<div class="b" style="left:939px;top:649px;width:68px;height:42px;background:#fde19f;border-color:rgba(0,0,0,0.13);"></div>
<div class="b" style="left:869px;top:649px;width:71px;height:42px;background:#fde19f;border-color:rgba(0,0,0,0.13);"></div>
<div class="b" style="left:801px;top:649px;width:69px;height:42px;background:#fde19f;border-color:rgba(0,0,0,0.13);"></div>
<div class="b" style="left:709px;top:649px;width:93px;height:42px;background:#fde19f;border-color:rgba(0,0,0,0.13);"></div>
<div class="b" style="left:639px;top:649px;width:71px;height:42px;background:#fde19f;border-color:rgba(0,0,0,0.13);"></div>
<div class="b" style="left:571px;top:649px;width:69px;height:42px;background:#fde19f;border-color:rgba(0,0,0,0.13);"></div>
<div class="b" style="left:504px;top:649px;width:68px;height:42px;background:#fde19f;border-color:rgba(0,0,0,0.13);"></div>
<div class="b" style="left:410px;top:649px;width:95px;height:42px;background:#fde19f;border-color:rgba(0,0,0,0.13);"></div>
<div class="b" style="left:342px;top:649px;width:69px;height:42px;background:#fde19f;border-color:rgba(0,0,0,0.13);"></div>
<div class="b" style="left:271px;top:649px;width:72px;height:42px;background:#fde19f;border-color:rgba(0,0,0,0.13);"></div>
<div class="b" style="left:203px;top:649px;width:69px;height:42px;background:#fde19f;border-color:rgba(0,0,0,0.13);"></div>
<div class="b" style="left:110px;top:649px;width:94px;height:42px;background:#fde19f;border-color:rgba(0,0,0,0.13);"></div>
<div class="b" style="left:35px;top:649px;width:76px;height:42px;background:#fde19f;border-color:rgba(0,0,0,0.13);"></div>
<div class="n" style="left:1805px;top:652px;width:76px;height:38px;text-align:right;">جمع فروش<br>صادراتی</div>
<div class="z" style="left:1740px;top:659px"></div>
<div class="z" style="left:1670px;top:659px"></div>
<div class="z" style="left:1520px;top:659px"></div>
<div class="z" style="left:1452px;top:659px"></div>
<div class="z" style="left:1406px;top:659px"></div>
<div class="z" style="left:1342px;top:659px"></div>
<div class="z" style="left:1268px;top:659px"></div>
<div class="z" style="left:1200px;top:659px"></div>
<div class="z" style="left:1050px;top:659px"></div>
<div class="z" style="left:970px;top:659px"></div>
<div class="z" style="left:902px;top:659px"></div>
<div class="z" style="left:753px;top:659px"></div>
<div class="z" style="left:672px;top:659px"></div>
<div class="z" style="left:603px;top:659px"></div>
<div class="z" style="left:455px;top:659px"></div>
<div class="z" style="left:374px;top:659px"></div>
<div class="z" style="left:304px;top:659px"></div>
<div class="z" style="left:154px;top:659px"></div>
<div class="b" style="left:1805px;top:690px;width:80px;height:42px;background:#d3d3d3;border-color:rgba(0,0,0,0.13);"></div>
<div class="b" style="left:1774px;top:690px;width:32px;height:42px;background:#d3d3d3;border-color:rgba(0,0,0,0.13);"></div>
<div class="b" style="left:1709px;top:690px;width:66px;height:42px;background:#d3d3d3;border-color:rgba(0,0,0,0.13);"></div>
<div class="b" style="left:1636px;top:690px;width:74px;height:42px;background:#d3d3d3;border-color:rgba(0,0,0,0.13);"></div>
<div class="b" style="left:1568px;top:690px;width:69px;height:42px;background:#d3d3d3;border-color:rgba(0,0,0,0.13);"></div>
<div class="b" style="left:1476px;top:690px;width:93px;height:42px;background:#d3d3d3;border-color:rgba(0,0,0,0.13);"></div>
<div class="b" style="left:1433px;top:690px;width:44px;height:42px;background:#d3d3d3;border-color:rgba(0,0,0,0.13);"></div>
<div class="b" style="left:1384px;top:690px;width:50px;height:42px;background:#d3d3d3;border-color:rgba(0,0,0,0.13);"></div>
<div class="b" style="left:1303px;top:690px;width:82px;height:42px;background:#d3d3d3;border-color:rgba(0,0,0,0.13);"></div>
<div class="b" style="left:1237px;top:690px;width:67px;height:42px;background:#d3d3d3;border-color:rgba(0,0,0,0.13);"></div>
<div class="b" style="left:1166px;top:690px;width:72px;height:42px;background:#d3d3d3;border-color:rgba(0,0,0,0.13);"></div>
<div class="b" style="left:1098px;top:690px;width:69px;height:42px;background:#d3d3d3;border-color:rgba(0,0,0,0.13);"></div>
<div class="b" style="left:1006px;top:690px;width:93px;height:42px;background:#d3d3d3;border-color:rgba(0,0,0,0.13);"></div>
<div class="b" style="left:939px;top:690px;width:68px;height:42px;background:#d3d3d3;border-color:rgba(0,0,0,0.13);"></div>
<div class="b" style="left:869px;top:690px;width:71px;height:42px;background:#d3d3d3;border-color:rgba(0,0,0,0.13);"></div>
<div class="b" style="left:801px;top:690px;width:69px;height:42px;background:#d3d3d3;border-color:rgba(0,0,0,0.13);"></div>
<div class="b" style="left:709px;top:690px;width:93px;height:42px;background:#d3d3d3;border-color:rgba(0,0,0,0.13);"></div>
<div class="b" style="left:639px;top:690px;width:71px;height:42px;background:#d3d3d3;border-color:rgba(0,0,0,0.13);"></div>
<div class="b" style="left:571px;top:690px;width:69px;height:42px;background:#d3d3d3;border-color:rgba(0,0,0,0.13);"></div>
<div class="b" style="left:504px;top:690px;width:68px;height:42px;background:#d3d3d3;border-color:rgba(0,0,0,0.13);"></div>
<div class="b" style="left:410px;top:690px;width:95px;height:42px;background:#d3d3d3;border-color:rgba(0,0,0,0.13);"></div>
<div class="b" style="left:342px;top:690px;width:69px;height:42px;background:#d3d3d3;border-color:rgba(0,0,0,0.13);"></div>
<div class="b" style="left:271px;top:690px;width:72px;height:42px;background:#d3d3d3;border-color:rgba(0,0,0,0.13);"></div>
<div class="b" style="left:203px;top:690px;width:69px;height:42px;background:#d3d3d3;border-color:rgba(0,0,0,0.13);"></div>
<div class="b" style="left:110px;top:690px;width:94px;height:42px;background:#d3d3d3;border-color:rgba(0,0,0,0.13);"></div>
<div class="b" style="left:35px;top:690px;width:76px;height:42px;background:#d3d3d3;border-color:rgba(0,0,0,0.13);"></div>
<div class="nb" style="left:1805px;top:693px;width:76px;height:38px;text-align:right;">درآمد ارائه<br>خدمات:</div>
<div class="b" style="left:1805px;top:731px;width:80px;height:42px;background:#fde19f;border-color:rgba(0,0,0,0.13);"></div>
<div class="b" style="left:1774px;top:731px;width:32px;height:42px;background:#fde19f;border-color:rgba(0,0,0,0.13);"></div>
<div class="b" style="left:1709px;top:731px;width:66px;height:42px;background:#fde19f;border-color:rgba(0,0,0,0.13);"></div>
<div class="b" style="left:1636px;top:731px;width:74px;height:42px;background:#fde19f;border-color:rgba(0,0,0,0.13);"></div>
<div class="b" style="left:1568px;top:731px;width:69px;height:42px;background:#fde19f;border-color:rgba(0,0,0,0.13);"></div>
<div class="b" style="left:1476px;top:731px;width:93px;height:42px;background:#fde19f;border-color:rgba(0,0,0,0.13);"></div>
<div class="b" style="left:1433px;top:731px;width:44px;height:42px;background:#fde19f;border-color:rgba(0,0,0,0.13);"></div>
<div class="b" style="left:1384px;top:731px;width:50px;height:42px;background:#fde19f;border-color:rgba(0,0,0,0.13);"></div>
<div class="b" style="left:1303px;top:731px;width:82px;height:42px;background:#fde19f;border-color:rgba(0,0,0,0.13);"></div>
<div class="b" style="left:1237px;top:731px;width:67px;height:42px;background:#fde19f;border-color:rgba(0,0,0,0.13);"></div>
<div class="b" style="left:1166px;top:731px;width:72px;height:42px;background:#fde19f;border-color:rgba(0,0,0,0.13);"></div>
<div class="b" style="left:1098px;top:731px;width:69px;height:42px;background:#fde19f;border-color:rgba(0,0,0,0.13);"></div>
<div class="b" style="left:1006px;top:731px;width:93px;height:42px;background:#fde19f;border-color:rgba(0,0,0,0.13);"></div>
<div class="b" style="left:939px;top:731px;width:68px;height:42px;background:#fde19f;border-color:rgba(0,0,0,0.13);"></div>
<div class="b" style="left:869px;top:731px;width:71px;height:42px;background:#fde19f;border-color:rgba(0,0,0,0.13);"></div>
<div class="b" style="left:801px;top:731px;width:69px;height:42px;background:#fde19f;border-color:rgba(0,0,0,0.13);"></div>
<div class="b" style="left:709px;top:731px;width:93px;height:42px;background:#fde19f;border-color:rgba(0,0,0,0.13);"></div>
<div class="b" style="left:639px;top:731px;width:71px;height:42px;background:#fde19f;border-color:rgba(0,0,0,0.13);"></div>
<div class="b" style="left:571px;top:731px;width:69px;height:42px;background:#fde19f;border-color:rgba(0,0,0,0.13);"></div>
<div class="b" style="left:504px;top:731px;width:68px;height:42px;background:#fde19f;border-color:rgba(0,0,0,0.13);"></div>
<div class="b" style="left:410px;top:731px;width:95px;height:42px;background:#fde19f;border-color:rgba(0,0,0,0.13);"></div>
<div class="b" style="left:342px;top:731px;width:69px;height:42px;background:#fde19f;border-color:rgba(0,0,0,0.13);"></div>
<div class="b" style="left:271px;top:731px;width:72px;height:42px;background:#fde19f;border-color:rgba(0,0,0,0.13);"></div>
<div class="b" style="left:203px;top:731px;width:69px;height:42px;background:#fde19f;border-color:rgba(0,0,0,0.13);"></div>
<div class="b" style="left:110px;top:731px;width:94px;height:42px;background:#fde19f;border-color:rgba(0,0,0,0.13);"></div>
<div class="b" style="left:35px;top:731px;width:76px;height:42px;background:#fde19f;border-color:rgba(0,0,0,0.13);"></div>
<div class="n" style="left:1805px;top:734px;width:76px;height:38px;text-align:right;">جمع درآمد<br>ارائه خدمات</div>
<div class="z" style="left:1740px;top:741px"></div>
<div class="z" style="left:1670px;top:741px"></div>
<div class="z" style="left:1520px;top:741px"></div>
<div class="z" style="left:1452px;top:741px"></div>
<div class="z" style="left:1406px;top:741px"></div>
<div class="z" style="left:1342px;top:741px"></div>
<div class="z" style="left:1268px;top:741px"></div>
<div class="z" style="left:1200px;top:741px"></div>
<div class="z" style="left:1050px;top:741px"></div>
<div class="z" style="left:970px;top:741px"></div>
<div class="z" style="left:902px;top:741px"></div>
<div class="z" style="left:753px;top:741px"></div>
<div class="z" style="left:672px;top:741px"></div>
<div class="z" style="left:603px;top:741px"></div>
<div class="z" style="left:455px;top:741px"></div>
<div class="z" style="left:374px;top:741px"></div>
<div class="z" style="left:304px;top:741px"></div>
<div class="z" style="left:154px;top:741px"></div>
<div class="b" style="left:1805px;top:772px;width:80px;height:43px;background:#d3d3d3;border-color:rgba(0,0,0,0.13);"></div>
<div class="b" style="left:1774px;top:772px;width:32px;height:43px;background:#d3d3d3;border-color:rgba(0,0,0,0.13);"></div>
<div class="b" style="left:1709px;top:772px;width:66px;height:43px;background:#d3d3d3;border-color:rgba(0,0,0,0.13);"></div>
<div class="b" style="left:1636px;top:772px;width:74px;height:43px;background:#d3d3d3;border-color:rgba(0,0,0,0.13);"></div>
<div class="b" style="left:1568px;top:772px;width:69px;height:43px;background:#d3d3d3;border-color:rgba(0,0,0,0.13);"></div>
<div class="b" style="left:1476px;top:772px;width:93px;height:43px;background:#d3d3d3;border-color:rgba(0,0,0,0.13);"></div>
<div class="b" style="left:1433px;top:772px;width:44px;height:43px;background:#d3d3d3;border-color:rgba(0,0,0,0.13);"></div>
<div class="b" style="left:1384px;top:772px;width:50px;height:43px;background:#d3d3d3;border-color:rgba(0,0,0,0.13);"></div>
<div class="b" style="left:1303px;top:772px;width:82px;height:43px;background:#d3d3d3;border-color:rgba(0,0,0,0.13);"></div>
<div class="b" style="left:1237px;top:772px;width:67px;height:43px;background:#d3d3d3;border-color:rgba(0,0,0,0.13);"></div>
<div class="b" style="left:1166px;top:772px;width:72px;height:43px;background:#d3d3d3;border-color:rgba(0,0,0,0.13);"></div>
<div class="b" style="left:1098px;top:772px;width:69px;height:43px;background:#d3d3d3;border-color:rgba(0,0,0,0.13);"></div>
<div class="b" style="left:1006px;top:772px;width:93px;height:43px;background:#d3d3d3;border-color:rgba(0,0,0,0.13);"></div>
<div class="b" style="left:939px;top:772px;width:68px;height:43px;background:#d3d3d3;border-color:rgba(0,0,0,0.13);"></div>
<div class="b" style="left:869px;top:772px;width:71px;height:43px;background:#d3d3d3;border-color:rgba(0,0,0,0.13);"></div>
<div class="b" style="left:801px;top:772px;width:69px;height:43px;background:#d3d3d3;border-color:rgba(0,0,0,0.13);"></div>
<div class="b" style="left:709px;top:772px;width:93px;height:43px;background:#d3d3d3;border-color:rgba(0,0,0,0.13);"></div>
<div class="b" style="left:639px;top:772px;width:71px;height:43px;background:#d3d3d3;border-color:rgba(0,0,0,0.13);"></div>
<div class="b" style="left:571px;top:772px;width:69px;height:43px;background:#d3d3d3;border-color:rgba(0,0,0,0.13);"></div>
<div class="b" style="left:504px;top:772px;width:68px;height:43px;background:#d3d3d3;border-color:rgba(0,0,0,0.13);"></div>
<div class="b" style="left:410px;top:772px;width:95px;height:43px;background:#d3d3d3;border-color:rgba(0,0,0,0.13);"></div>
<div class="b" style="left:342px;top:772px;width:69px;height:43px;background:#d3d3d3;border-color:rgba(0,0,0,0.13);"></div>
<div class="b" style="left:271px;top:772px;width:72px;height:43px;background:#d3d3d3;border-color:rgba(0,0,0,0.13);"></div>
<div class="b" style="left:203px;top:772px;width:69px;height:43px;background:#d3d3d3;border-color:rgba(0,0,0,0.13);"></div>
<div class="b" style="left:110px;top:772px;width:94px;height:43px;background:#d3d3d3;border-color:rgba(0,0,0,0.13);"></div>
<div class="b" style="left:35px;top:772px;width:76px;height:43px;background:#d3d3d3;border-color:rgba(0,0,0,0.13);"></div>
<div class="nb" style="left:1805px;top:775px;width:76px;height:39px;text-align:right;">برگشت از<br>فروش:</div>
<div class="b" style="left:1805px;top:814px;width:80px;height:42px;background:#fde19f;border-color:rgba(0,0,0,0.13);"></div>
<div class="b" style="left:1774px;top:814px;width:32px;height:42px;background:#fde19f;border-color:rgba(0,0,0,0.13);"></div>
<div class="b" style="left:1709px;top:814px;width:66px;height:42px;background:#fde19f;border-color:rgba(0,0,0,0.13);"></div>
<div class="b" style="left:1636px;top:814px;width:74px;height:42px;background:#fde19f;border-color:rgba(0,0,0,0.13);"></div>
<div class="b" style="left:1568px;top:814px;width:69px;height:42px;background:#fde19f;border-color:rgba(0,0,0,0.13);"></div>
<div class="b" style="left:1476px;top:814px;width:93px;height:42px;background:#fde19f;border-color:rgba(0,0,0,0.13);"></div>
<div class="b" style="left:1433px;top:814px;width:44px;height:42px;background:#fde19f;border-color:rgba(0,0,0,0.13);"></div>
<div class="b" style="left:1384px;top:814px;width:50px;height:42px;background:#fde19f;border-color:rgba(0,0,0,0.13);"></div>
<div class="b" style="left:1303px;top:814px;width:82px;height:42px;background:#fde19f;border-color:rgba(0,0,0,0.13);"></div>
<div class="b" style="left:1237px;top:814px;width:67px;height:42px;background:#fde19f;border-color:rgba(0,0,0,0.13);"></div>
<div class="b" style="left:1166px;top:814px;width:72px;height:42px;background:#fde19f;border-color:rgba(0,0,0,0.13);"></div>
<div class="b" style="left:1098px;top:814px;width:69px;height:42px;background:#fde19f;border-color:rgba(0,0,0,0.13);"></div>
<div class="b" style="left:1006px;top:814px;width:93px;height:42px;background:#fde19f;border-color:rgba(0,0,0,0.13);"></div>
<div class="b" style="left:939px;top:814px;width:68px;height:42px;background:#fde19f;border-color:rgba(0,0,0,0.13);"></div>
<div class="b" style="left:869px;top:814px;width:71px;height:42px;background:#fde19f;border-color:rgba(0,0,0,0.13);"></div>
<div class="b" style="left:801px;top:814px;width:69px;height:42px;background:#fde19f;border-color:rgba(0,0,0,0.13);"></div>
<div class="b" style="left:709px;top:814px;width:93px;height:42px;background:#fde19f;border-color:rgba(0,0,0,0.13);"></div>
<div class="b" style="left:639px;top:814px;width:71px;height:42px;background:#fde19f;border-color:rgba(0,0,0,0.13);"></div>
<div class="b" style="left:571px;top:814px;width:69px;height:42px;background:#fde19f;border-color:rgba(0,0,0,0.13);"></div>
<div class="b" style="left:504px;top:814px;width:68px;height:42px;background:#fde19f;border-color:rgba(0,0,0,0.13);"></div>
<div class="b" style="left:410px;top:814px;width:95px;height:42px;background:#fde19f;border-color:rgba(0,0,0,0.13);"></div>
<div class="b" style="left:342px;top:814px;width:69px;height:42px;background:#fde19f;border-color:rgba(0,0,0,0.13);"></div>
<div class="b" style="left:271px;top:814px;width:72px;height:42px;background:#fde19f;border-color:rgba(0,0,0,0.13);"></div>
<div class="b" style="left:203px;top:814px;width:69px;height:42px;background:#fde19f;border-color:rgba(0,0,0,0.13);"></div>
<div class="b" style="left:110px;top:814px;width:94px;height:42px;background:#fde19f;border-color:rgba(0,0,0,0.13);"></div>
<div class="b" style="left:35px;top:814px;width:76px;height:42px;background:#fde19f;border-color:rgba(0,0,0,0.13);"></div>
<div class="n" style="left:1805px;top:817px;width:76px;height:38px;text-align:right;">جمع برگشت از<br>فروش</div>
<div class="z" style="left:1670px;top:824px"></div>
<div class="z" style="left:1520px;top:824px"></div>
<div class="z" style="left:1406px;top:824px"></div>
<div class="z" style="left:1342px;top:824px"></div>
<div class="z" style="left:1200px;top:824px"></div>
<div class="z" style="left:1050px;top:824px"></div>
<div class="z" style="left:902px;top:824px"></div>
<div class="z" style="left:753px;top:824px"></div>
<div class="z" style="left:603px;top:824px"></div>
<div class="z" style="left:455px;top:824px"></div>
<div class="z" style="left:304px;top:824px"></div>
<div class="z" style="left:154px;top:824px"></div>
<div class="b" style="left:1805px;top:855px;width:80px;height:25px;background:#cfe2f3;border-color:rgba(0,0,0,0.13);"></div>
<div class="b" style="left:1774px;top:855px;width:32px;height:25px;background:#cfe2f3;border-color:rgba(0,0,0,0.13);"></div>
<div class="b" style="left:1709px;top:855px;width:66px;height:25px;background:#d3d3d3;border-color:rgba(0,0,0,0.13);"></div>
<div class="b" style="left:1636px;top:855px;width:74px;height:25px;background:#d3d3d3;border-color:rgba(0,0,0,0.13);"></div>
<div class="b" style="left:1568px;top:855px;width:69px;height:25px;background:#d3d3d3;border-color:rgba(0,0,0,0.13);"></div>
<div class="b" style="left:1476px;top:855px;width:93px;height:25px;background:#cfe2f3;border-color:rgba(0,0,0,0.13);"></div>
<div class="b" style="left:1433px;top:855px;width:44px;height:25px;background:#d3d3d3;border-color:rgba(0,0,0,0.13);"></div>
<div class="b" style="left:1384px;top:855px;width:50px;height:25px;background:#d3d3d3;border-color:rgba(0,0,0,0.13);"></div>
<div class="b" style="left:1303px;top:855px;width:82px;height:25px;background:#cfe2f3;border-color:rgba(0,0,0,0.13);"></div>
<div class="b" style="left:1237px;top:855px;width:67px;height:25px;background:#d3d3d3;border-color:rgba(0,0,0,0.13);"></div>
<div class="b" style="left:1166px;top:855px;width:72px;height:25px;background:#d3d3d3;border-color:rgba(0,0,0,0.13);"></div>
<div class="b" style="left:1098px;top:855px;width:69px;height:25px;background:#d3d3d3;border-color:rgba(0,0,0,0.13);"></div>
<div class="b" style="left:1006px;top:855px;width:93px;height:25px;background:#cfe2f3;border-color:rgba(0,0,0,0.13);"></div>
<div class="b" style="left:939px;top:855px;width:68px;height:25px;background:#d3d3d3;border-color:rgba(0,0,0,0.13);"></div>
<div class="b" style="left:869px;top:855px;width:71px;height:25px;background:#d3d3d3;border-color:rgba(0,0,0,0.13);"></div>
<div class="b" style="left:801px;top:855px;width:69px;height:25px;background:#d3d3d3;border-color:rgba(0,0,0,0.13);"></div>
<div class="b" style="left:709px;top:855px;width:93px;height:25px;background:#cfe2f3;border-color:rgba(0,0,0,0.13);"></div>
<div class="b" style="left:639px;top:855px;width:71px;height:25px;background:#d3d3d3;border-color:rgba(0,0,0,0.13);"></div>
<div class="b" style="left:571px;top:855px;width:69px;height:25px;background:#d3d3d3;border-color:rgba(0,0,0,0.13);"></div>
<div class="b" style="left:504px;top:855px;width:68px;height:25px;background:#d3d3d3;border-color:rgba(0,0,0,0.13);"></div>
<div class="b" style="left:410px;top:855px;width:95px;height:25px;background:#cfe2f3;border-color:rgba(0,0,0,0.13);"></div>
<div class="b" style="left:342px;top:855px;width:69px;height:25px;background:#d3d3d3;border-color:rgba(0,0,0,0.13);"></div>
<div class="b" style="left:271px;top:855px;width:72px;height:25px;background:#d3d3d3;border-color:rgba(0,0,0,0.13);"></div>
<div class="b" style="left:203px;top:855px;width:69px;height:25px;background:#d3d3d3;border-color:rgba(0,0,0,0.13);"></div>
<div class="b" style="left:110px;top:855px;width:94px;height:25px;background:#cfe2f3;border-color:rgba(0,0,0,0.13);"></div>
<div class="b" style="left:35px;top:855px;width:76px;height:25px;background:#cfe2f3;border-color:rgba(0,0,0,0.13);"></div>
<div class="n" style="left:1805px;top:858px;width:76px;height:21px;text-align:right;">تخفیفات</div>
<div class="z" style="left:1520px;top:865px"></div>
<div class="z" style="left:1342px;top:865px"></div>
<div class="z" style="left:1050px;top:865px"></div>
<div class="z" style="left:753px;top:865px"></div>
<div class="z" style="left:455px;top:865px"></div>
<div class="z" style="left:154px;top:865px"></div>
<div class="b" style="left:1805px;top:879px;width:80px;height:25px;background:#fde19f;border-color:rgba(0,0,0,0.13);"></div>
<div class="b" style="left:1774px;top:879px;width:32px;height:25px;background:#fde19f;border-color:rgba(0,0,0,0.13);"></div>
<div class="b" style="left:1709px;top:879px;width:66px;height:25px;background:#fde19f;border-color:rgba(0,0,0,0.13);"></div>
<div class="b" style="left:1636px;top:879px;width:74px;height:25px;background:#fde19f;border-color:rgba(0,0,0,0.13);"></div>
<div class="b" style="left:1568px;top:879px;width:69px;height:25px;background:#fde19f;border-color:rgba(0,0,0,0.13);"></div>
<div class="b" style="left:1476px;top:879px;width:93px;height:25px;background:#fde19f;border-color:rgba(0,0,0,0.13);"></div>
<div class="b" style="left:1433px;top:879px;width:44px;height:25px;background:#fde19f;border-color:rgba(0,0,0,0.13);"></div>
<div class="b" style="left:1384px;top:879px;width:50px;height:25px;background:#fde19f;border-color:rgba(0,0,0,0.13);"></div>
<div class="b" style="left:1303px;top:879px;width:82px;height:25px;background:#fde19f;border-color:rgba(0,0,0,0.13);"></div>
<div class="b" style="left:1237px;top:879px;width:67px;height:25px;background:#fde19f;border-color:rgba(0,0,0,0.13);"></div>
<div class="b" style="left:1166px;top:879px;width:72px;height:25px;background:#fde19f;border-color:rgba(0,0,0,0.13);"></div>
<div class="b" style="left:1098px;top:879px;width:69px;height:25px;background:#fde19f;border-color:rgba(0,0,0,0.13);"></div>
<div class="b" style="left:1006px;top:879px;width:93px;height:25px;background:#fde19f;border-color:rgba(0,0,0,0.13);"></div>
<div class="b" style="left:939px;top:879px;width:68px;height:25px;background:#fde19f;border-color:rgba(0,0,0,0.13);"></div>
<div class="b" style="left:869px;top:879px;width:71px;height:25px;background:#fde19f;border-color:rgba(0,0,0,0.13);"></div>
<div class="b" style="left:801px;top:879px;width:69px;height:25px;background:#fde19f;border-color:rgba(0,0,0,0.13);"></div>
<div class="b" style="left:709px;top:879px;width:93px;height:25px;background:#fde19f;border-color:rgba(0,0,0,0.13);"></div>
<div class="b" style="left:639px;top:879px;width:71px;height:25px;background:#fde19f;border-color:rgba(0,0,0,0.13);"></div>
<div class="b" style="left:571px;top:879px;width:69px;height:25px;background:#fde19f;border-color:rgba(0,0,0,0.13);"></div>
<div class="b" style="left:504px;top:879px;width:68px;height:25px;background:#fde19f;border-color:rgba(0,0,0,0.13);"></div>
<div class="b" style="left:410px;top:879px;width:95px;height:25px;background:#fde19f;border-color:rgba(0,0,0,0.13);"></div>
<div class="b" style="left:342px;top:879px;width:69px;height:25px;background:#fde19f;border-color:rgba(0,0,0,0.13);"></div>
<div class="b" style="left:271px;top:879px;width:72px;height:25px;background:#fde19f;border-color:rgba(0,0,0,0.13);"></div>
<div class="b" style="left:203px;top:879px;width:69px;height:25px;background:#fde19f;border-color:rgba(0,0,0,0.13);"></div>
<div class="b" style="left:110px;top:879px;width:94px;height:25px;background:#fde19f;border-color:rgba(0,0,0,0.13);"></div>
<div class="b" style="left:35px;top:879px;width:76px;height:25px;background:#fde19f;border-color:rgba(0,0,0,0.13);"></div>
<div class="n" style="left:1805px;top:882px;width:76px;height:21px;text-align:right;">جمع</div>
<div class="v" style="left:1476px;top:883px;width:92px;height:20px;text-align:center;">۷,۷۰۵,۱۷۸</div>
<div class="z" style="left:1342px;top:889px"></div>
<div class="v" style="left:1006px;top:883px;width:92px;height:20px;text-align:center;">۷,۷۰۵,۱۷۸</div>
<div class="v" style="left:709px;top:883px;width:92px;height:20px;text-align:center;">۱,۸۳۳,۵۹۴</div>
<div class="v" style="left:410px;top:883px;width:94px;height:20px;text-align:center;">۹,۵۳۸,۷۷۲</div>
<div class="v" style="left:110px;top:883px;width:93px;height:20px;text-align:center;">۴,۶۴۵,۹۱۶</div>

<!-- section 2 -->
<div style="position:absolute;left:35px;top:914px;width:1850px;height:27px;background:#0298cb"></div>
<div class="a" style="left:1502px;top:918px;width:379px;text-align:right;font-size:9.8px;font-weight:bold;color:#fff;line-height:19px;-webkit-text-stroke:0.5px #fff">خرید مواد اولیه</div>

<div class="b" style="left:1756px;top:947px;width:129px;height:49px;background:#0298cb;border-color:#74d1f2;"></div>
<div class="h" style="left:1756px;top:950px;width:128px;height:45px;text-align:center;">شرح</div>
<div class="b" style="left:1697px;top:947px;width:60px;height:49px;background:#0298cb;border-color:#74d1f2;"></div>
<div class="h" style="left:1697px;top:950px;width:59px;height:45px;text-align:center;">واحد</div>
<div class="b" style="left:1434px;top:947px;width:264px;height:25px;background:#0298cb;border-color:#74d1f2;"></div>
<div class="hg" style="left:1434px;top:950px;width:263px;height:21px;text-align:center;">از ابتدای سال مالی تا تاریخ ۱۴۰۴/۰۴/۳۱</div>
<div class="b" style="left:1225px;top:947px;width:210px;height:25px;background:#0298cb;border-color:#74d1f2;"></div>
<div class="hg" style="left:1225px;top:950px;width:209px;height:21px;text-align:center;">اصلاحات</div>
<div class="b" style="left:932px;top:947px;width:294px;height:25px;background:#0298cb;border-color:#74d1f2;"></div>
<div class="hg" style="left:932px;top:950px;width:293px;height:21px;text-align:center;">ازابتدای سال مالی تا تاریخ ۱۴۰۴/۰۴/۳۱ (اصلاح شده)</div>
<div class="b" style="left:684px;top:947px;width:249px;height:25px;background:#0298cb;border-color:#74d1f2;"></div>
<div class="hg" style="left:684px;top:950px;width:248px;height:21px;text-align:center;">خرید دوره یک ماهه منتهی به ۱۴۰۴/۰۵/۳۱</div>
<div class="b" style="left:278px;top:947px;width:407px;height:25px;background:#0298cb;border-color:#74d1f2;"></div>
<div class="hg" style="left:278px;top:950px;width:406px;height:21px;text-align:center;">مواد اولیه خریداری شده از ابتدای دوره تا پایان دوره منتهی به ۱۴۰۴/۰۵/۳۱</div>
<div class="b" style="left:35px;top:947px;width:244px;height:25px;background:#0298cb;border-color:#74d1f2;"></div>
<div class="hg" style="left:35px;top:950px;width:243px;height:21px;text-align:center;">از ابتدای سال مالی تا تاریخ ۱۴۰۳/۰۵/۳۱</div>
<div class="b" style="left:1617px;top:971px;width:81px;height:25px;background:#0298cb;border-color:#74d1f2;"></div>
<div class="h" style="left:1617px;top:974px;width:80px;height:21px;text-align:center;">مقدار</div>
<div class="b" style="left:1542px;top:971px;width:76px;height:25px;background:#0298cb;border-color:#74d1f2;"></div>
<div class="h" style="left:1542px;top:974px;width:75px;height:21px;text-align:center;">نرخ (ریال)</div>
<div class="b" style="left:1434px;top:971px;width:109px;height:25px;background:#0298cb;border-color:#74d1f2;"></div>
<div class="h" style="left:1434px;top:974px;width:108px;height:21px;text-align:center;">مبلغ (میلیون ریال)</div>
<div class="b" style="left:1398px;top:971px;width:37px;height:25px;background:#0298cb;border-color:#74d1f2;"></div>
<div class="h" style="left:1398px;top:974px;width:36px;height:21px;text-align:center;">مقدار</div>
<div class="b" style="left:1336px;top:971px;width:63px;height:25px;background:#0298cb;border-color:#74d1f2;"></div>
<div class="h" style="left:1336px;top:974px;width:62px;height:21px;text-align:center;">نرخ (ریال)</div>
<div class="b" style="left:1225px;top:971px;width:112px;height:25px;background:#0298cb;border-color:#74d1f2;"></div>
<div class="h" style="left:1225px;top:974px;width:111px;height:21px;text-align:center;">مبلغ ( میلیون ریال)</div>
<div class="b" style="left:1136px;top:971px;width:90px;height:25px;background:#0298cb;border-color:#74d1f2;"></div>
<div class="h" style="left:1136px;top:974px;width:89px;height:21px;text-align:center;">مقدار</div>
<div class="b" style="left:1052px;top:971px;width:85px;height:25px;background:#0298cb;border-color:#74d1f2;"></div>
<div class="h" style="left:1052px;top:974px;width:84px;height:21px;text-align:center;">نرخ (ریال)</div>
<div class="b" style="left:932px;top:971px;width:121px;height:25px;background:#0298cb;border-color:#74d1f2;"></div>
<div class="h" style="left:932px;top:974px;width:120px;height:21px;text-align:center;">مبلغ (میلیون ریال)</div>
<div class="b" style="left:860px;top:971px;width:73px;height:25px;background:#0298cb;border-color:#74d1f2;"></div>
<div class="h" style="left:860px;top:974px;width:72px;height:21px;text-align:center;">مقدار</div>
<div class="b" style="left:792px;top:971px;width:69px;height:25px;background:#0298cb;border-color:#74d1f2;"></div>
<div class="h" style="left:792px;top:974px;width:68px;height:21px;text-align:center;">نرخ (ریال)</div>
<div class="b" style="left:684px;top:971px;width:109px;height:25px;background:#0298cb;border-color:#74d1f2;"></div>
<div class="h" style="left:684px;top:974px;width:108px;height:21px;text-align:center;">مبلغ (میلیون ریال)</div>
<div class="b" style="left:560px;top:971px;width:125px;height:25px;background:#0298cb;border-color:#74d1f2;"></div>
<div class="h" style="left:560px;top:974px;width:124px;height:21px;text-align:center;">مقدار</div>
<div class="b" style="left:453px;top:971px;width:108px;height:25px;background:#0298cb;border-color:#74d1f2;"></div>
<div class="h" style="left:453px;top:974px;width:107px;height:21px;text-align:center;">نرخ (ریال)</div>
<div class="b" style="left:278px;top:971px;width:176px;height:25px;background:#0298cb;border-color:#74d1f2;"></div>
<div class="h" style="left:278px;top:974px;width:175px;height:21px;text-align:center;">مبلغ (میلیون ریال)</div>
<div class="b" style="left:205px;top:971px;width:74px;height:25px;background:#0298cb;border-color:#74d1f2;"></div>
<div class="h" style="left:205px;top:974px;width:73px;height:21px;text-align:center;">مقدار</div>
<div class="b" style="left:143px;top:971px;width:63px;height:25px;background:#0298cb;border-color:#74d1f2;"></div>
<div class="h" style="left:143px;top:974px;width:62px;height:21px;text-align:center;">نرخ (ریال)</div>
<div class="b" style="left:35px;top:971px;width:109px;height:25px;background:#0298cb;border-color:#74d1f2;"></div>
<div class="h" style="left:35px;top:974px;width:108px;height:21px;text-align:center;">مبلغ (میلیون ریال)</div>
<div class="b" style="left:1756px;top:995px;width:129px;height:25px;background:#d3d3d3;border-color:rgba(0,0,0,0.13);"></div>
<div class="b" style="left:1697px;top:995px;width:60px;height:25px;background:#d3d3d3;border-color:rgba(0,0,0,0.13);"></div>
<div class="b" style="left:1617px;top:995px;width:81px;height:25px;background:#d3d3d3;border-color:rgba(0,0,0,0.13);"></div>
<div class="b" style="left:1542px;top:995px;width:76px;height:25px;background:#d3d3d3;border-color:rgba(0,0,0,0.13);"></div>
<div class="b" style="left:1434px;top:995px;width:109px;height:25px;background:#d3d3d3;border-color:rgba(0,0,0,0.13);"></div>
<div class="b" style="left:1398px;top:995px;width:37px;height:25px;background:#d3d3d3;border-color:rgba(0,0,0,0.13);"></div>
<div class="b" style="left:1336px;top:995px;width:63px;height:25px;background:#d3d3d3;border-color:rgba(0,0,0,0.13);"></div>
<div class="b" style="left:1225px;top:995px;width:112px;height:25px;background:#d3d3d3;border-color:rgba(0,0,0,0.13);"></div>
<div class="b" style="left:1136px;top:995px;width:90px;height:25px;background:#d3d3d3;border-color:rgba(0,0,0,0.13);"></div>
<div class="b" style="left:1052px;top:995px;width:85px;height:25px;background:#d3d3d3;border-color:rgba(0,0,0,0.13);"></div>
<div class="b" style="left:932px;top:995px;width:121px;height:25px;background:#d3d3d3;border-color:rgba(0,0,0,0.13);"></div>
<div class="b" style="left:860px;top:995px;width:73px;height:25px;background:#d3d3d3;border-color:rgba(0,0,0,0.13);"></div>
<div class="b" style="left:792px;top:995px;width:69px;height:25px;background:#d3d3d3;border-color:rgba(0,0,0,0.13);"></div>
<div class="b" style="left:684px;top:995px;width:109px;height:25px;background:#d3d3d3;border-color:rgba(0,0,0,0.13);"></div>
<div class="b" style="left:560px;top:995px;width:125px;height:25px;background:#d3d3d3;border-color:rgba(0,0,0,0.13);"></div>
<div class="b" style="left:453px;top:995px;width:108px;height:25px;background:#d3d3d3;border-color:rgba(0,0,0,0.13);"></div>
<div class="b" style="left:278px;top:995px;width:176px;height:25px;background:#d3d3d3;border-color:rgba(0,0,0,0.13);"></div>
<div class="b" style="left:205px;top:995px;width:74px;height:25px;background:#d3d3d3;border-color:rgba(0,0,0,0.13);"></div>
<div class="b" style="left:143px;top:995px;width:63px;height:25px;background:#d3d3d3;border-color:rgba(0,0,0,0.13);"></div>
<div class="b" style="left:35px;top:995px;width:109px;height:25px;background:#d3d3d3;border-color:rgba(0,0,0,0.13);"></div>
<div class="nb" style="left:1756px;top:998px;width:125px;height:21px;text-align:right;">مواد اولیه داخلی</div>
<div class="b" style="left:1756px;top:1019px;width:129px;height:25px;background:#cfe2f3;border-color:rgba(0,0,0,0.13);"></div>
<div class="b" style="left:1697px;top:1019px;width:60px;height:25px;background:#cfe2f3;border-color:rgba(0,0,0,0.13);"></div>
<div class="b" style="left:1617px;top:1019px;width:81px;height:25px;background:#cfe2f3;border-color:rgba(0,0,0,0.13);"></div>
<div class="b" style="left:1542px;top:1019px;width:76px;height:25px;background:#fde19f;border-color:rgba(0,0,0,0.13);"></div>
<div class="b" style="left:1434px;top:1019px;width:109px;height:25px;background:#cfe2f3;border-color:rgba(0,0,0,0.13);"></div>
<div class="b" style="left:1398px;top:1019px;width:37px;height:25px;background:#cfe2f3;border-color:rgba(0,0,0,0.13);"></div>
<div class="b" style="left:1336px;top:1019px;width:63px;height:25px;background:#fde19f;border-color:rgba(0,0,0,0.13);"></div>
<div class="b" style="left:1225px;top:1019px;width:112px;height:25px;background:#cfe2f3;border-color:rgba(0,0,0,0.13);"></div>
<div class="b" style="left:1136px;top:1019px;width:90px;height:25px;background:#fde19f;border-color:rgba(0,0,0,0.13);"></div>
<div class="b" style="left:1052px;top:1019px;width:85px;height:25px;background:#fde19f;border-color:rgba(0,0,0,0.13);"></div>
<div class="b" style="left:932px;top:1019px;width:121px;height:25px;background:#fde19f;border-color:rgba(0,0,0,0.13);"></div>
<div class="b" style="left:860px;top:1019px;width:73px;height:25px;background:#cfe2f3;border-color:rgba(0,0,0,0.13);"></div>
<div class="b" style="left:792px;top:1019px;width:69px;height:25px;background:#fde19f;border-color:rgba(0,0,0,0.13);"></div>
<div class="b" style="left:684px;top:1019px;width:109px;height:25px;background:#cfe2f3;border-color:rgba(0,0,0,0.13);"></div>
<div class="b" style="left:560px;top:1019px;width:125px;height:25px;background:#fde19f;border-color:rgba(0,0,0,0.13);"></div>
<div class="b" style="left:453px;top:1019px;width:108px;height:25px;background:#fde19f;border-color:rgba(0,0,0,0.13);"></div>
<div class="b" style="left:278px;top:1019px;width:176px;height:25px;background:#fde19f;border-color:rgba(0,0,0,0.13);"></div>
<div class="b" style="left:205px;top:1019px;width:74px;height:25px;background:#cfe2f3;border-color:rgba(0,0,0,0.13);"></div>
<div class="b" style="left:143px;top:1019px;width:63px;height:25px;background:#fde19f;border-color:rgba(0,0,0,0.13);"></div>
<div class="b" style="left:35px;top:1019px;width:109px;height:25px;background:#cfe2f3;border-color:rgba(0,0,0,0.13);"></div>
<div class="n" style="left:1756px;top:1022px;width:125px;height:21px;text-align:right;">مواد اولیه ساخت</div>
<div class="n" style="left:1697px;top:1022px;width:56px;height:21px;text-align:right;">کیلو وعدد</div>
<div class="v" style="left:1617px;top:1023px;width:80px;height:20px;text-align:center;">۹۴۱,۰۰۰</div>
<div class="v" style="left:1542px;top:1023px;width:75px;height:20px;text-align:center;">۹۴۹,۷۰۷</div>
<div class="v" style="left:1434px;top:1023px;width:108px;height:20px;text-align:center;">۸۹۳,۶۷۴</div>
<div class="z" style="left:1414px;top:1029px"></div>
<div class="z" style="left:1365px;top:1029px"></div>
<div class="z" style="left:1278px;top:1029px"></div>
<div class="v" style="left:1136px;top:1023px;width:89px;height:20px;text-align:center;">۹۴۱,۰۰۰</div>
<div class="v" style="left:1052px;top:1023px;width:84px;height:20px;text-align:center;">۹۴۹,۷۰۷</div>
<div class="v" style="left:932px;top:1023px;width:120px;height:20px;text-align:center;">۸۹۳,۶۷۴</div>
<div class="v" style="left:860px;top:1023px;width:72px;height:20px;text-align:center;">۸۱,۰۰۰</div>
<div class="v" style="left:792px;top:1023px;width:68px;height:20px;text-align:center;">۷۵۷,۴۸۱</div>
<div class="v" style="left:684px;top:1023px;width:108px;height:20px;text-align:center;">۶۱,۳۵۶</div>
<div class="v" style="left:560px;top:1023px;width:124px;height:20px;text-align:center;">۱,۰۲۲,۰۰۰</div>
<div class="v" style="left:453px;top:1023px;width:107px;height:20px;text-align:center;">۹۳۴,۴۷۲</div>
<div class="v" style="left:278px;top:1023px;width:175px;height:20px;text-align:center;">۹۵۵,۰۳۰</div>
<div class="v" style="left:205px;top:1023px;width:73px;height:20px;text-align:center;">۳۱۸,۱۶۶</div>
<div class="v" style="left:143px;top:1023px;width:62px;height:20px;text-align:center;">۴۹۹,۶۰۱</div>
<div class="v" style="left:35px;top:1023px;width:108px;height:20px;text-align:center;">۱۵۸,۹۵۶</div>
<div class="b" style="left:1756px;top:1043px;width:129px;height:25px;background:#ededed;border-color:rgba(0,0,0,0.13);"></div>
<div class="b" style="left:1697px;top:1043px;width:60px;height:25px;background:#ededed;border-color:rgba(0,0,0,0.13);"></div>
<div class="b" style="left:1617px;top:1043px;width:81px;height:25px;background:#ededed;border-color:rgba(0,0,0,0.13);"></div>
<div class="b" style="left:1542px;top:1043px;width:76px;height:25px;background:#fde19f;border-color:rgba(0,0,0,0.13);"></div>
<div class="b" style="left:1434px;top:1043px;width:109px;height:25px;background:#ededed;border-color:rgba(0,0,0,0.13);"></div>
<div class="b" style="left:1398px;top:1043px;width:37px;height:25px;background:#ededed;border-color:rgba(0,0,0,0.13);"></div>
<div class="b" style="left:1336px;top:1043px;width:63px;height:25px;background:#fde19f;border-color:rgba(0,0,0,0.13);"></div>
<div class="b" style="left:1225px;top:1043px;width:112px;height:25px;background:#ededed;border-color:rgba(0,0,0,0.13);"></div>
<div class="b" style="left:1136px;top:1043px;width:90px;height:25px;background:#fde19f;border-color:rgba(0,0,0,0.13);"></div>
<div class="b" style="left:1052px;top:1043px;width:85px;height:25px;background:#fde19f;border-color:rgba(0,0,0,0.13);"></div>
<div class="b" style="left:932px;top:1043px;width:121px;height:25px;background:#fde19f;border-color:rgba(0,0,0,0.13);"></div>
<div class="b" style="left:860px;top:1043px;width:73px;height:25px;background:#ededed;border-color:rgba(0,0,0,0.13);"></div>
<div class="b" style="left:792px;top:1043px;width:69px;height:25px;background:#fde19f;border-color:rgba(0,0,0,0.13);"></div>
<div class="b" style="left:684px;top:1043px;width:109px;height:25px;background:#ededed;border-color:rgba(0,0,0,0.13);"></div>
<div class="b" style="left:560px;top:1043px;width:125px;height:25px;background:#fde19f;border-color:rgba(0,0,0,0.13);"></div>
<div class="b" style="left:453px;top:1043px;width:108px;height:25px;background:#fde19f;border-color:rgba(0,0,0,0.13);"></div>
<div class="b" style="left:278px;top:1043px;width:176px;height:25px;background:#fde19f;border-color:rgba(0,0,0,0.13);"></div>
<div class="b" style="left:205px;top:1043px;width:74px;height:25px;background:#ededed;border-color:rgba(0,0,0,0.13);"></div>
<div class="b" style="left:143px;top:1043px;width:63px;height:25px;background:#fde19f;border-color:rgba(0,0,0,0.13);"></div>
<div class="b" style="left:35px;top:1043px;width:109px;height:25px;background:#ededed;border-color:rgba(0,0,0,0.13);"></div>
<div class="n" style="left:1756px;top:1046px;width:125px;height:21px;text-align:right;">مواد اولیه بسته بندي</div>
<div class="n" style="left:1697px;top:1046px;width:56px;height:21px;text-align:right;">کیلو وعدد</div>
<div class="v" style="left:1617px;top:1047px;width:80px;height:20px;text-align:center;">۵۵,۱۸۳,۲۸۵</div>
<div class="v" style="left:1542px;top:1047px;width:75px;height:20px;text-align:center;">۴,۵۳۲</div>
<div class="v" style="left:1434px;top:1047px;width:108px;height:20px;text-align:center;">۲۵۰,۰۶۸</div>
<div class="z" style="left:1414px;top:1053px"></div>
<div class="z" style="left:1365px;top:1053px"></div>
<div class="z" style="left:1278px;top:1053px"></div>
<div class="v" style="left:1136px;top:1047px;width:89px;height:20px;text-align:center;">۵۵,۱۸۳,۲۸۵</div>
<div class="v" style="left:1052px;top:1047px;width:84px;height:20px;text-align:center;">۴,۵۳۲</div>
<div class="v" style="left:932px;top:1047px;width:120px;height:20px;text-align:center;">۲۵۰,۰۶۸</div>
<div class="v" style="left:860px;top:1047px;width:72px;height:20px;text-align:center;">۹,۷۴۶,۳۸۹</div>
<div class="v" style="left:792px;top:1047px;width:68px;height:20px;text-align:center;">۸,۹۵۲</div>
<div class="v" style="left:684px;top:1047px;width:108px;height:20px;text-align:center;">۸۷,۲۴۵</div>
<div class="v" style="left:560px;top:1047px;width:124px;height:20px;text-align:center;">۶۴,۹۲۹,۶۷۴</div>
<div class="v" style="left:453px;top:1047px;width:107px;height:20px;text-align:center;">۵,۱۹۵</div>
<div class="v" style="left:278px;top:1047px;width:175px;height:20px;text-align:center;">۳۳۷,۳۱۳</div>
<div class="v" style="left:205px;top:1047px;width:73px;height:20px;text-align:center;">۵۹,۱۶۶,۸۰۰</div>
<div class="v" style="left:143px;top:1047px;width:62px;height:20px;text-align:center;">۲,۴۵۵</div>
<div class="v" style="left:35px;top:1047px;width:108px;height:20px;text-align:center;">۱۴۵,۲۵۷</div>
<div class="b" style="left:1756px;top:1067px;width:129px;height:25px;background:#fde19f;border-color:rgba(0,0,0,0.13);"></div>
<div class="b" style="left:1697px;top:1067px;width:60px;height:25px;background:#fde19f;border-color:rgba(0,0,0,0.13);"></div>
<div class="b" style="left:1617px;top:1067px;width:81px;height:25px;background:#fde19f;border-color:rgba(0,0,0,0.13);"></div>
<div class="b" style="left:1542px;top:1067px;width:76px;height:25px;background:#fde19f;border-color:rgba(0,0,0,0.13);"></div>
<div class="b" style="left:1434px;top:1067px;width:109px;height:25px;background:#fde19f;border-color:rgba(0,0,0,0.13);"></div>
<div class="b" style="left:1398px;top:1067px;width:37px;height:25px;background:#fde19f;border-color:rgba(0,0,0,0.13);"></div>
<div class="b" style="left:1336px;top:1067px;width:63px;height:25px;background:#fde19f;border-color:rgba(0,0,0,0.13);"></div>
<div class="b" style="left:1225px;top:1067px;width:112px;height:25px;background:#fde19f;border-color:rgba(0,0,0,0.13);"></div>
<div class="b" style="left:1136px;top:1067px;width:90px;height:25px;background:#fde19f;border-color:rgba(0,0,0,0.13);"></div>
<div class="b" style="left:1052px;top:1067px;width:85px;height:25px;background:#fde19f;border-color:rgba(0,0,0,0.13);"></div>
<div class="b" style="left:932px;top:1067px;width:121px;height:25px;background:#fde19f;border-color:rgba(0,0,0,0.13);"></div>
<div class="b" style="left:860px;top:1067px;width:73px;height:25px;background:#fde19f;border-color:rgba(0,0,0,0.13);"></div>
<div class="b" style="left:792px;top:1067px;width:69px;height:25px;background:#fde19f;border-color:rgba(0,0,0,0.13);"></div>
<div class="b" style="left:684px;top:1067px;width:109px;height:25px;background:#fde19f;border-color:rgba(0,0,0,0.13);"></div>
<div class="b" style="left:560px;top:1067px;width:125px;height:25px;background:#fde19f;border-color:rgba(0,0,0,0.13);"></div>
<div class="b" style="left:453px;top:1067px;width:108px;height:25px;background:#fde19f;border-color:rgba(0,0,0,0.13);"></div>
<div class="b" style="left:278px;top:1067px;width:176px;height:25px;background:#fde19f;border-color:rgba(0,0,0,0.13);"></div>
<div class="b" style="left:205px;top:1067px;width:74px;height:25px;background:#fde19f;border-color:rgba(0,0,0,0.13);"></div>
<div class="b" style="left:143px;top:1067px;width:63px;height:25px;background:#fde19f;border-color:rgba(0,0,0,0.13);"></div>
<div class="b" style="left:35px;top:1067px;width:109px;height:25px;background:#fde19f;border-color:rgba(0,0,0,0.13);"></div>
<div class="n" style="left:1756px;top:1070px;width:125px;height:21px;text-align:right;">جمع مواد اولیه داخلی</div>
<div class="z" style="left:1688px;top:1077px"></div>
<div class="z" style="left:1608px;top:1077px"></div>
<div class="v" style="left:1434px;top:1071px;width:108px;height:20px;text-align:center;">۱,۱۴۳,۷۴۲</div>
<div class="z" style="left:1425px;top:1077px"></div>
<div class="z" style="left:1389px;top:1077px"></div>
<div class="z" style="left:1278px;top:1077px"></div>
<div class="z" style="left:1216px;top:1077px"></div>
<div class="z" style="left:1127px;top:1077px"></div>
<div class="v" style="left:932px;top:1071px;width:120px;height:20px;text-align:center;">۱,۱۴۳,۷۴۲</div>
<div class="z" style="left:923px;top:1077px"></div>
<div class="z" style="left:851px;top:1077px"></div>
<div class="v" style="left:684px;top:1071px;width:108px;height:20px;text-align:center;">۱۴۸,۶۰۱</div>
<div class="z" style="left:675px;top:1077px"></div>
<div class="z" style="left:551px;top:1077px"></div>
<div class="v" style="left:278px;top:1071px;width:175px;height:20px;text-align:center;">۱,۲۹۲,۳۴۳</div>
<div class="z" style="left:269px;top:1077px"></div>
<div class="z" style="left:196px;top:1077px"></div>
<div class="v" style="left:35px;top:1071px;width:108px;height:20px;text-align:center;">۳۰۴,۲۱۳</div>

<!-- watermark -->
<div class="a" style="left:606px;top:497px;width:700px;height:90px;text-align:center;font-size:80px;font-weight:bold;color:rgba(120,120,120,0.13);transform:rotate(-46deg) scaleX(1.22);transform-origin:center;line-height:90px;direction:ltr">@Codal360.ir</div>
</body></html>
